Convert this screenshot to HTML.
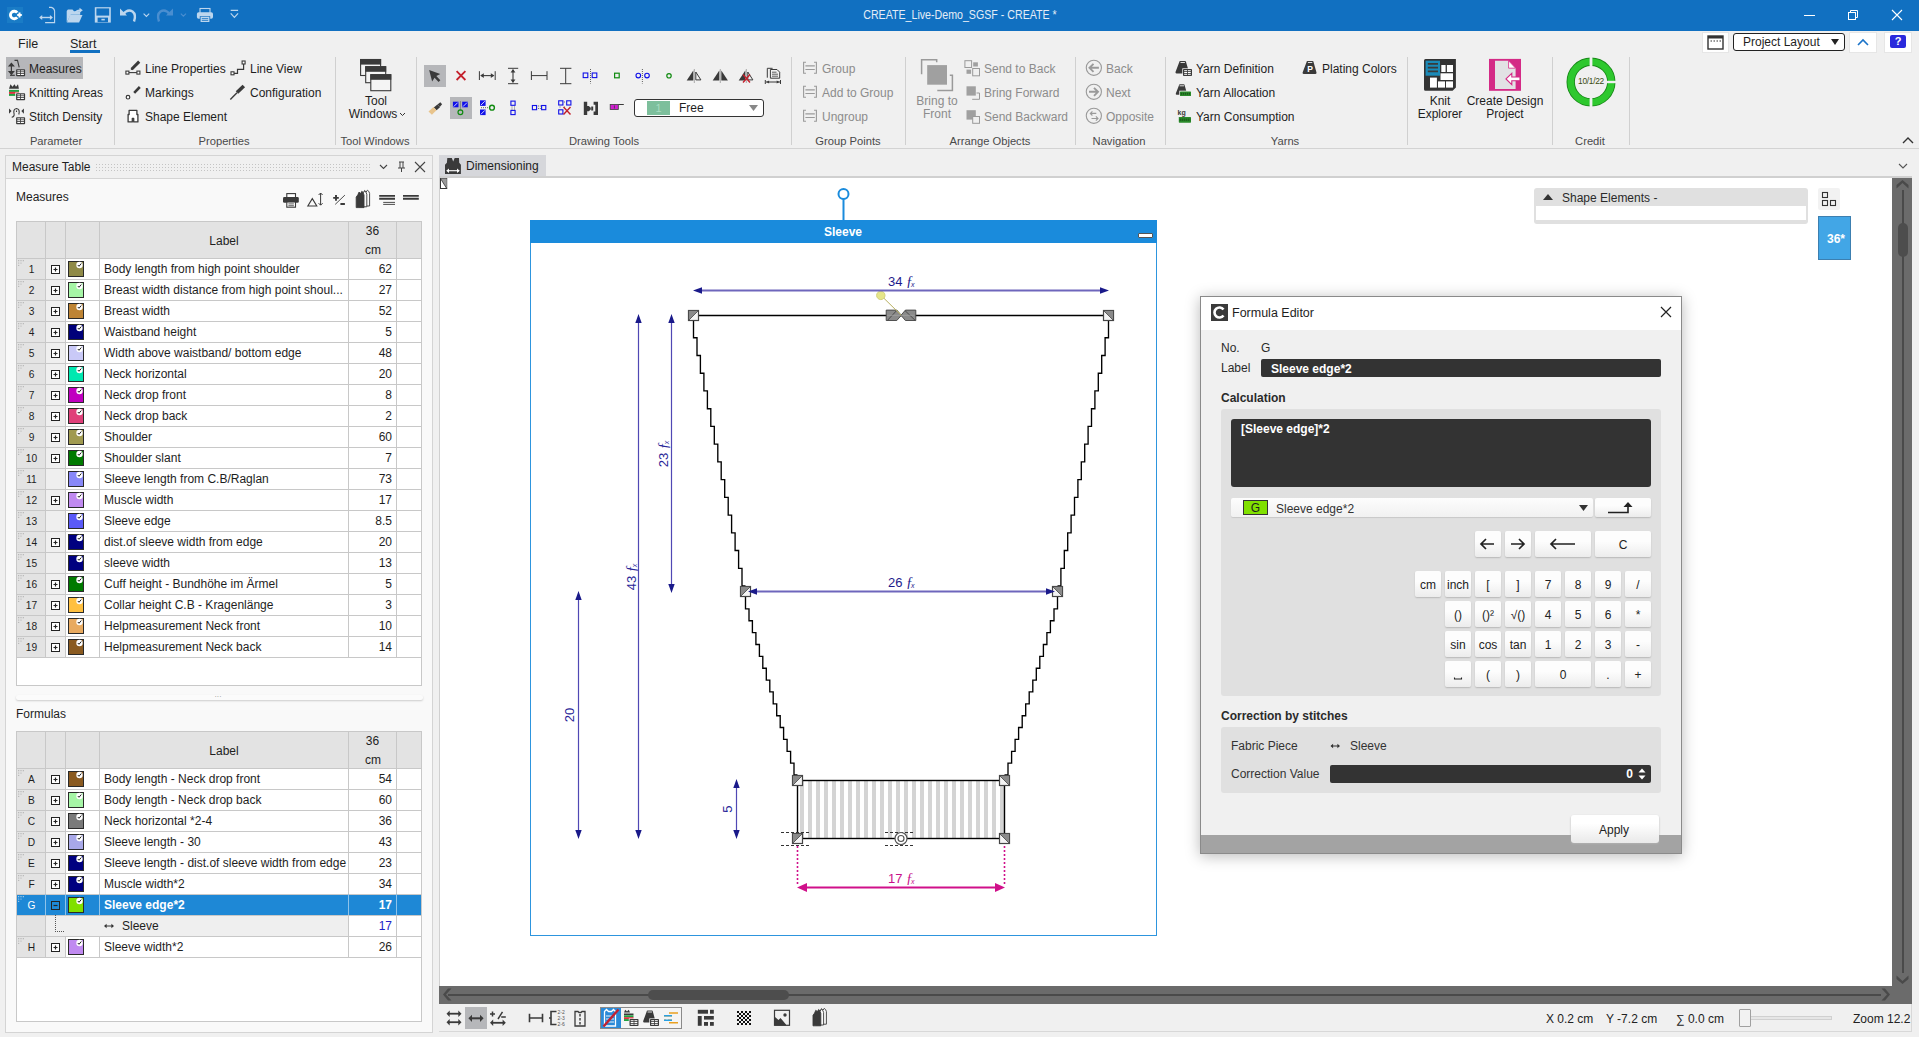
<!DOCTYPE html><html><head><meta charset="utf-8"><style>
html,body{margin:0;padding:0;}
body{width:1919px;height:1037px;overflow:hidden;position:relative;background:#f0f0f0;font-family:"Liberation Sans",sans-serif;}
.t{position:absolute;white-space:nowrap;}
.r{position:absolute;}
</style></head><body>
<div class="r" style="left:0px;top:0px;width:1919px;height:31px;background:#1170c1;"></div>
<svg class="r" style="left:7px;top:7px;" width="16" height="16" viewBox="0 0 16 16"><rect width="16" height="16" fill="#1a7cc6"/><path d="M10.2 5.6a3.8 3.8 0 1 0 0 4.8" stroke="#fff" stroke-width="2.9" fill="none"/><path d="M10.2 8h4.6M12.5 5.6v4.8" stroke="#fff" stroke-width="2"/></svg>
<svg class="r" style="left:30px;top:0px" width="220" height="31" viewBox="30 0 220 31"><path d="M49 7.4h2.3q2.6 0.4 3.3 3.4v11.8h-9.5" stroke="#bcd6ee" stroke-width="1.1" fill="none"/><path d="M40.5 17.5h11" stroke="#bcd6ee" stroke-width="1.4"/><path d="M39.2 17.5l3-2.6v5.2zM52.9 17.5l-3-2.6v5.2z" fill="#bcd6ee"/><path d="M66.7 22.6v-11.6l1.2-1.6h4.6l1.5 1.8h6.2v3.5h-9.5z" fill="#bcd6ee"/><path d="M66.9 22.6l3.2-7.6h12.4l-3.4 7.6z" fill="#bcd6ee"/><path d="M74.5 14q2-4.2 6.4-3.6" stroke="#bcd6ee" stroke-width="1.6" fill="none"/><path d="M82.8 10.2l-3.3-2.4v5z" fill="#bcd6ee"/><rect x="94.8" y="7.2" width="16" height="15.4" fill="#bcd6ee"/><rect x="96.4" y="8.4" width="12.8" height="7.2" fill="#1170c1"/><rect x="97.6" y="17.6" width="10.4" height="4.6" fill="#1170c1"/><rect x="101.4" y="18.8" width="3.4" height="1.6" fill="#bcd6ee"/><path d="M123 14.5q4.5-6 9.5-3q4 3 1.5 10" stroke="#bcd6ee" stroke-width="2.4" fill="none"/><path d="M120 8.5v7h7z" fill="#bcd6ee"/><path d="M143.6 13.6l2.8 2.8l2.8-2.8" stroke="#bcd6ee" stroke-width="1.1" fill="none"/><path d="M170 14.5q-4.5-6-9.5-3q-4 3-1.5 10" stroke="#4a8ed0" stroke-width="2.4" fill="none"/><path d="M173 8.5v7h-7z" fill="#4a8ed0"/><path d="M180.8 13.6l2.6 2.6l2.6-2.6" stroke="#4a8ed0" stroke-width="1.1" fill="none"/><rect x="200" y="8.5" width="10" height="5" fill="none" stroke="#bcd6ee" stroke-width="1.1"/><rect x="196.9" y="12.2" width="16.1" height="6.6" rx="1.8" fill="#bcd6ee"/><rect x="199.8" y="16.2" width="10.4" height="6.4" fill="#1170c1"/><rect x="200.6" y="16.8" width="8.8" height="5.2" fill="#bcd6ee"/><path d="M201.8 18.6h6.4M201.8 20.4h6.4" stroke="#1170c1" stroke-width="0.8"/><path d="M230.7 10.3h7.4M230.7 13.4l3.7 4l3.7-4" stroke="#bcd6ee" stroke-width="1.2" fill="none"/></svg>
<div class="t" style="left:660px;width:600px;text-align:center;top:6.6px;font-size:12.3px;line-height:16px;color:#e4edf7;font-weight:normal;transform:scaleX(0.865);">CREATE_Live-Demo_SGSF - CREATE *</div>
<div class="r" style="left:1804px;top:15px;width:11px;height:1px;background:#ffffff;"></div>
<svg class="r" style="left:1847px;top:9px;" width="12" height="12" viewBox="0 0 12 12"><rect x="1.5" y="3.5" width="7" height="7" stroke="#fff" fill="none"/><path d="M3.5 3.5v-2h7v7h-2" stroke="#fff" fill="none"/></svg>
<svg class="r" style="left:1891px;top:9px;" width="12" height="12" viewBox="0 0 12 12"><path d="M1 1l10 10M11 1l-10 10" stroke="#fff" stroke-width="1.1"/></svg>
<div class="t" style="left:18px;top:36.0px;font-size:12.5px;line-height:16px;color:#1e1e1e;font-weight:normal;">File</div>
<div class="t" style="left:70px;top:36.0px;font-size:12.5px;line-height:16px;color:#1e1e1e;font-weight:normal;">Start</div>
<div class="r" style="left:70px;top:50px;width:30px;height:3px;background:#1170c1;"></div>
<div class="r" style="left:1702px;top:32px;width:27px;height:21px;background:#ffffff;border:1px solid #e6e6e6;box-sizing:border-box;"></div>
<svg class="r" style="left:1707px;top:34px;" width="17" height="17" viewBox="0 0 17 17"><rect x="1" y="2" width="15" height="13" stroke="#333" stroke-width="1.4" fill="none"/><rect x="1" y="2" width="15" height="2.5" fill="#333"/><path d="M3.5 7h1.5M6.5 7h1.5M9.5 7h1.5M12.5 7h1.5" stroke="#333" stroke-width="1.2"/></svg>
<div class="r" style="left:1733px;top:33px;width:112px;height:18px;background:#ffffff;border:1px solid #222;box-sizing:border-box;border-radius:3px;"></div>
<div class="t" style="left:1743px;top:34.0px;font-size:12px;line-height:16px;color:#1e1e1e;font-weight:normal;">Project Layout</div>
<svg class="r" style="left:1830px;top:38px;" width="10" height="8" viewBox="0 0 10 8"><path d="M1 1h8l-4 6z" fill="#222"/></svg>
<div class="r" style="left:1849px;top:32px;width:28px;height:21px;background:#ffffff;border:1px solid #e6e6e6;box-sizing:border-box;"></div>
<svg class="r" style="left:1857px;top:38px;" width="12" height="8" viewBox="0 0 12 8"><path d="M1 7l5-5l5 5" stroke="#1a73c8" stroke-width="1.6" fill="none"/></svg>
<div class="r" style="left:1884px;top:32px;width:28px;height:21px;background:#ffffff;border:1px solid #e6e6e6;box-sizing:border-box;"></div>
<div class="r" style="left:1890px;top:35px;width:16px;height:13px;background:#2a2adc;border-radius:2px;"></div>
<div class="t" style="left:1598px;width:600px;text-align:center;top:35.0px;font-size:11px;line-height:13px;color:#ffffff;font-weight:bold;">?</div>
<div class="r" style="left:0px;top:148px;width:1919px;height:1px;background:#d3d3d3;"></div>
<div class="r" style="left:114px;top:57px;width:1px;height:88px;background:#d0d0d0;"></div>
<div class="r" style="left:335px;top:57px;width:1px;height:88px;background:#d0d0d0;"></div>
<div class="r" style="left:416px;top:57px;width:1px;height:88px;background:#d0d0d0;"></div>
<div class="r" style="left:791px;top:57px;width:1px;height:88px;background:#d0d0d0;"></div>
<div class="r" style="left:905px;top:57px;width:1px;height:88px;background:#d0d0d0;"></div>
<div class="r" style="left:1075px;top:57px;width:1px;height:88px;background:#d0d0d0;"></div>
<div class="r" style="left:1165px;top:57px;width:1px;height:88px;background:#d0d0d0;"></div>
<div class="r" style="left:1407px;top:57px;width:1px;height:88px;background:#d0d0d0;"></div>
<div class="r" style="left:1552px;top:57px;width:1px;height:88px;background:#d0d0d0;"></div>
<div class="r" style="left:1629px;top:57px;width:1px;height:88px;background:#d0d0d0;"></div>
<div class="t" style="left:-244px;width:600px;text-align:center;top:132.5px;font-size:11.2px;line-height:16px;color:#4a4a4a;font-weight:normal;">Parameter</div>
<div class="t" style="left:-76px;width:600px;text-align:center;top:132.5px;font-size:11.2px;line-height:16px;color:#4a4a4a;font-weight:normal;">Properties</div>
<div class="t" style="left:75px;width:600px;text-align:center;top:132.5px;font-size:11.2px;line-height:16px;color:#4a4a4a;font-weight:normal;">Tool Windows</div>
<div class="t" style="left:304px;width:600px;text-align:center;top:132.5px;font-size:11.2px;line-height:16px;color:#4a4a4a;font-weight:normal;">Drawing Tools</div>
<div class="t" style="left:548px;width:600px;text-align:center;top:132.5px;font-size:11.2px;line-height:16px;color:#4a4a4a;font-weight:normal;">Group Points</div>
<div class="t" style="left:690px;width:600px;text-align:center;top:132.5px;font-size:11.2px;line-height:16px;color:#4a4a4a;font-weight:normal;">Arrange Objects</div>
<div class="t" style="left:819px;width:600px;text-align:center;top:132.5px;font-size:11.2px;line-height:16px;color:#4a4a4a;font-weight:normal;">Navigation</div>
<div class="t" style="left:985px;width:600px;text-align:center;top:132.5px;font-size:11.2px;line-height:16px;color:#4a4a4a;font-weight:normal;">Yarns</div>
<div class="t" style="left:1290px;width:600px;text-align:center;top:132.5px;font-size:11.2px;line-height:16px;color:#4a4a4a;font-weight:normal;">Credit</div>
<svg class="r" style="left:1902px;top:136px;" width="12" height="8" viewBox="0 0 12 8"><path d="M1 7l5-5l5 5" stroke="#333" stroke-width="1.4" fill="none"/></svg>
<div class="r" style="left:6px;top:57px;width:77px;height:22px;background:#b6b7ba;"></div>
<svg class="r" style="left:6px;top:57px" width="22" height="70" viewBox="6 57 22 70"><path d="M11.4 64v9.5M9.2 66l2.2-2.6l2.2 2.6zM9.2 71.6l2.2 2.6l2.2-2.6z" stroke="#3a3a3a" stroke-width="1.2" fill="#3a3a3a"/><path d="M10 75.3h4.8" stroke="#3a3a3a" stroke-width="1.2"/><path d="M14.5 60.4h3l1.7 7" stroke="#3a3a3a" stroke-width="1.1" fill="none"/><rect x="16.1" y="69.2" width="9" height="7" rx="0.8" fill="#3a3a3a"/><rect x="17.3" y="70.4" width="2.9" height="1.0" fill="#fff"/><rect x="17.3" y="72.2" width="2.9" height="1.0" fill="#fff"/><rect x="17.3" y="74.0" width="2.9" height="1.0" fill="#fff"/><rect x="21.0" y="70.4" width="2.9" height="1.0" fill="#fff"/><rect x="21.0" y="72.2" width="2.9" height="1.0" fill="#fff"/><rect x="21.0" y="74.0" width="2.9" height="1.0" fill="#fff"/><path d="M9 88.8l1.5-4.5l2 2.5l2-2.5l1.5 2.5l2-2.5l0.9 4.5z" fill="#3a3a3a"/><rect x="9" y="89.9" width="10" height="2" fill="#20a040"/><rect x="9" y="91.9" width="10" height="2" fill="#e03040"/><rect x="9" y="93.9" width="10" height="2" fill="#20a040"/><rect x="15.2" y="92.5" width="10.5" height="8.3" fill="#f0f0f0"/><rect x="16.1" y="93.2" width="9" height="7" rx="0.8" fill="#3a3a3a"/><rect x="17.3" y="94.4" width="2.9" height="1.0" fill="#fff"/><rect x="17.3" y="96.2" width="2.9" height="1.0" fill="#fff"/><rect x="17.3" y="98.0" width="2.9" height="1.0" fill="#fff"/><rect x="21.0" y="94.4" width="2.9" height="1.0" fill="#fff"/><rect x="21.0" y="96.2" width="2.9" height="1.0" fill="#fff"/><rect x="21.0" y="98.0" width="2.9" height="1.0" fill="#fff"/><path d="M9 108.4v5.4l2.6-2.7zM23.9 108.4v5.4l-2.6-2.7z" fill="#3a3a3a"/><path d="M14.2 114.5q-1.5-5.5 2.3-6q3.8 0.5 2.3 6M16.5 110.5v1.5M14.2 114.5q0 2.5-2.5 2.7" stroke="#3a3a3a" stroke-width="1.1" fill="none"/><rect x="15.2" y="116.5" width="10.5" height="8.3" fill="#f0f0f0"/><rect x="16.1" y="117.2" width="9" height="7" rx="0.8" fill="#3a3a3a"/><rect x="17.3" y="118.4" width="2.9" height="1.0" fill="#fff"/><rect x="17.3" y="120.2" width="2.9" height="1.0" fill="#fff"/><rect x="17.3" y="122.0" width="2.9" height="1.0" fill="#fff"/><rect x="21.0" y="118.4" width="2.9" height="1.0" fill="#fff"/><rect x="21.0" y="120.2" width="2.9" height="1.0" fill="#fff"/><rect x="21.0" y="122.0" width="2.9" height="1.0" fill="#fff"/></svg>
<div class="t" style="left:29px;top:61.0px;font-size:12px;line-height:16px;color:#1e1e1e;font-weight:normal;">Measures</div>
<div class="t" style="left:29px;top:85.0px;font-size:12px;line-height:16px;color:#1e1e1e;font-weight:normal;">Knitting Areas</div>
<div class="t" style="left:29px;top:109.0px;font-size:12px;line-height:16px;color:#1e1e1e;font-weight:normal;">Stitch Density</div>
<svg class="r" style="left:120px;top:55px" width="130" height="70" viewBox="120 55 130 70"><path d="M128.5 72.6h9" stroke="#3a3a3a" stroke-width="1.1"/><rect x="125.9" y="71.1" width="3" height="3" fill="#fff" stroke="#3a3a3a" stroke-width="1.1"/><rect x="136.9" y="71.1" width="3" height="3" fill="#fff" stroke="#3a3a3a" stroke-width="1.1"/><path d="M131.6 69.2L139.2 61.6" stroke="#3a3a3a" stroke-width="3"/><path d="M130.6 70.2l0.8-1.8l1.2 1.2z" fill="#3a3a3a"/><circle cx="128" cy="97.2" r="1.8" fill="#fff" stroke="#3a3a3a" stroke-width="1.2"/><path d="M134.2 92.8L139.8 87" stroke="#3a3a3a" stroke-width="2.6"/><path d="M129.1 114.5v-4.2h7.8v4.2h1v7.4h-4.2v-3.5h-1.4v3.5h-4.2v-7.4z" fill="#fff" stroke="#3a3a3a" stroke-width="1.3" stroke-linejoin="round"/><path d="M232.5 73.3h5v-3.9h6.1v-6.9" stroke="#3a3a3a" stroke-width="1.2" fill="none"/><rect x="231" y="71.8" width="3" height="3" fill="#fff" stroke="#3a3a3a" stroke-width="1.1"/><rect x="242.1" y="61" width="3" height="3" fill="#fff" stroke="#3a3a3a" stroke-width="1.1"/><path d="M230.3 99.4L237 92.7" stroke="#3a3a3a" stroke-width="1.4"/><path d="M237 92.5L243.8 86" stroke="#3a3a3a" stroke-width="3.6"/></svg>
<div class="t" style="left:145px;top:61.0px;font-size:12px;line-height:16px;color:#1e1e1e;font-weight:normal;">Line Properties</div>
<div class="t" style="left:250px;top:61.0px;font-size:12px;line-height:16px;color:#1e1e1e;font-weight:normal;">Line View</div>
<div class="t" style="left:145px;top:85.0px;font-size:12px;line-height:16px;color:#1e1e1e;font-weight:normal;">Markings</div>
<div class="t" style="left:250px;top:85.0px;font-size:12px;line-height:16px;color:#1e1e1e;font-weight:normal;">Configuration</div>
<div class="t" style="left:145px;top:109.0px;font-size:12px;line-height:16px;color:#1e1e1e;font-weight:normal;">Shape Element</div>
<svg class="r" style="left:355px;top:55px" width="40" height="40" viewBox="355 55 40 40"><rect x="360.6" y="59.5" width="20" height="16" fill="#f4f4f4" stroke="#3a3a3a" stroke-width="1.1"/><rect x="360.1" y="59" width="21" height="5.6" fill="#3a3a3a"/><rect x="365.7" y="66.7" width="20" height="16" fill="#f4f4f4" stroke="#3a3a3a" stroke-width="1.1"/><rect x="365.2" y="66.2" width="21" height="5.6" fill="#3a3a3a"/><rect x="370.8" y="74.7" width="20" height="16" fill="#f4f4f4" stroke="#3a3a3a" stroke-width="1.1"/><rect x="370.3" y="74.2" width="21" height="5.6" fill="#3a3a3a"/></svg>
<div class="t" style="left:76px;width:600px;text-align:center;top:93.0px;font-size:12px;line-height:16px;color:#1e1e1e;font-weight:normal;">Tool</div>
<div class="t" style="left:73px;width:600px;text-align:center;top:106.0px;font-size:12px;line-height:16px;color:#1e1e1e;font-weight:normal;">Windows</div>
<svg class="r" style="left:399px;top:112px;" width="7" height="5" viewBox="0 0 7 5"><path d="M1 1l2.5 2.5l2.5-2.5" stroke="#333" fill="none"/></svg>
<div class="r" style="left:424px;top:65px;width:22px;height:22px;background:#b6b7ba;"></div>
<div class="r" style="left:450px;top:97px;width:22px;height:22px;background:#b6b7ba;"></div>
<svg class="r" style="left:420px;top:60px" width="370" height="60" viewBox="420 60 370 60"><path d="M430 69.5l10.5 5.3l-4.2 1.6l3.4 4.6l-2 1.5l-3.4-4.6l-2.9 3.2z" fill="#3a3a3a" transform="rotate(-8 434 76)"/><path d="M456.6 71.2l8.8 8.8M465.4 71.2l-8.8 8.8" stroke="#c4202c" stroke-width="1.8"/><path d="M479.4 71.2v8.8M495.2 71.2v8.8" stroke="#3a3a3a" stroke-width="1"/><path d="M481 75.6h12.6" stroke="#3a3a3a" stroke-width="1.1"/><path d="M480.2 75.6l3.6-2.4v4.8zM494.4 75.6l-3.6-2.4v4.8z" fill="#3a3a3a"/><path d="M508 68.3h10.2M508 83.7h10.2" stroke="#3a3a3a" stroke-width="1"/><path d="M513 69.8v12.4" stroke="#3a3a3a" stroke-width="1.1"/><path d="M513 69l-2.4 3.6h4.8zM513 83l-2.4-3.6h4.8z" fill="#3a3a3a"/><path d="M531.4 71.2v8.8M547 71.2v8.8M531.4 75.6h15.6" stroke="#3a3a3a" stroke-width="1"/><path d="M560 68.3h11.4M560 83.7h11.4M565.7 68.3v15.4" stroke="#3a3a3a" stroke-width="1"/><rect x="583.2" y="73" width="4.6" height="4.6" fill="none" stroke="#1010e8" stroke-width="1.1"/><rect x="592.2" y="73" width="4.6" height="4.6" fill="none" stroke="#1010e8" stroke-width="1.1"/><path d="M590.5 69v14.5" stroke="#3a3a3a" stroke-dasharray="1 1" stroke-width="0.8"/><rect x="614.6" y="73.2" width="4.6" height="4.6" fill="none" stroke="#108a10" stroke-width="1.2"/><circle cx="638.3" cy="75.6" r="2.3" fill="none" stroke="#1010e8" stroke-width="1.1"/><circle cx="647" cy="75.6" r="2.3" fill="none" stroke="#1010e8" stroke-width="1.1"/><path d="M642.4 69v14.5" stroke="#3a3a3a" stroke-dasharray="1 1" stroke-width="0.8"/><circle cx="669" cy="75.8" r="2.2" fill="none" stroke="#108a10" stroke-width="1.2"/><path d="M693.3 70.6v9.8h-6.6z" fill="#3a3a3a"/><path d="M695.8 72v7.9h5.1z" fill="none" stroke="#3a3a3a" stroke-width="1"/><path d="M694.3 69.5v14" stroke="#3a3a3a" stroke-dasharray="1 1" stroke-width="0.8"/><path d="M719.3 70.6v9.8h-6.6z" fill="#3a3a3a"/><path d="M721.3 70.6v9.8h6.6z" fill="#3a3a3a"/><path d="M720.3 69.5v14" stroke="#3a3a3a" stroke-dasharray="1 1" stroke-width="0.8"/><path d="M745.3 70.6v9.8h-6.6z" fill="#3a3a3a"/><path d="M747.8 72v7.9h5.1z" fill="none" stroke="#3a3a3a" stroke-width="1"/><path d="M746.3 69.5v14" stroke="#3a3a3a" stroke-dasharray="1 1" stroke-width="0.8"/><path d="M743.0 74.5l7 8M750.0 74.5l-7 8" stroke="#c4202c" stroke-width="1.4"/><path d="M767.3 77.7v-9.4h5.3" fill="none" stroke="#3a3a3a" stroke-width="1"/><path d="M770.4 78.2v-8.7h6.6l2.7 2.7v6z" fill="#f0f0f0" stroke="#3a3a3a" stroke-width="1"/><path d="M772 72.2h4.5M772 74.2h6M772 76.2h6" stroke="#3a3a3a" stroke-width="0.8"/><path d="M765.3 80v4M780.5 80v4M766 82h14" stroke="#3a3a3a" stroke-width="1"/><path d="M766.3 82l2.8-1.6v3.2zM779.5 82l-2.8-1.6v3.2z" fill="#3a3a3a"/><path d="M437.5 104.5l2.8-2.2l1.8 2l-2.3 2.7z" fill="#3a3a3a"/><path d="M433.8 107.5l3.6-3l2.6 2.8l-3.4 3z" fill="#3a3a3a"/><path d="M428.5 111.5l5-4.5l3 3.2l-4.6 4.6z" fill="#e8c48c"/><rect x="452.9" y="101.7" width="5.6" height="5.6" fill="#1010e8"/><rect x="462.2" y="101.7" width="5.6" height="5.6" fill="#1010e8"/><path d="M453.7 106.6l4-4M463 106.6l4-4" stroke="#fff" stroke-width="0.8"/><path d="M460.4 101.5v10" stroke="#3a3a3a" stroke-dasharray="1 1" stroke-width="0.8"/><circle cx="460.4" cy="112.2" r="2.4" fill="none" stroke="#108a10" stroke-width="1.2"/><rect x="480" y="100.3" width="5.6" height="5.6" fill="#1010e8"/><rect x="480" y="109.5" width="5.6" height="5.6" fill="#1010e8"/><path d="M480.8 105.2l4-4M480.8 114.4l4-4" stroke="#fff" stroke-width="0.8"/><path d="M481 107.7h7.5" stroke="#3a3a3a" stroke-dasharray="1 1" stroke-width="0.8"/><circle cx="492" cy="107.7" r="2.4" fill="none" stroke="#108a10" stroke-width="1.4"/><rect x="510.9" y="101.1" width="4.2" height="4.2" fill="none" stroke="#1010e8" stroke-width="1.1"/><rect x="510.9" y="110.4" width="4.2" height="4.2" fill="none" stroke="#1010e8" stroke-width="1.1"/><path d="M511.5 107h1M514 107h1M511.5 109h1M514 109h1" stroke="#3a3a3a" stroke-width="0.7"/><rect x="532.4" y="105.5" width="4.2" height="4.2" fill="none" stroke="#1010e8" stroke-width="1.1"/><rect x="541.6" y="105.5" width="4.2" height="4.2" fill="none" stroke="#1010e8" stroke-width="1.1"/><path d="M538 106h1M538 108.5h1M539.8 106h1M539.8 108.5h1" stroke="#3a3a3a" stroke-width="0.7"/><rect x="558.7" y="100.8" width="4.2" height="4.2" fill="none" stroke="#1010e8" stroke-width="1.1"/><rect x="566.7" y="100.8" width="4.2" height="4.2" fill="none" stroke="#1010e8" stroke-width="1.1"/><rect x="558.7" y="109.8" width="4.2" height="4.2" fill="none" stroke="#1010e8" stroke-width="1.1"/><path d="M563.5 107l7 7.5M570.5 107l-7 7.5" stroke="#c4202c" stroke-width="1.4"/><path d="M564 102h1M564 107h0.8M559.5 107h1" stroke="#3a3a3a" stroke-width="0.7"/><path d="M583.8 101.8h3.4v4.3h1.6l2 1.7v1.8l-2 1.7h-1.6v3.6h-3.4z" fill="#3a3a3a"/><path d="M598 101.8h-4.4v3h1.7v6.8h-1.7v3.3h4.4z" fill="#3a3a3a"/><path d="M591.2 106.5h2v4h-2z" fill="#3a3a3a"/><rect x="610.2" y="104.5" width="8.1" height="4.9" fill="#d020d0" stroke="#3a3a3a" stroke-width="0.8"/><path d="M614.4 105.5v3" stroke="#3a3a3a" stroke-width="0.8"/><path d="M618.3 104.5h5.5" stroke="#3a3a3a" stroke-width="1"/></svg>
<div class="r" style="left:634px;top:99px;width:130px;height:18px;background:#ffffff;border:1px solid #333;box-sizing:border-box;border-radius:3px;"></div>
<div class="r" style="left:647px;top:101px;width:23px;height:14px;background:#7dbf9c;"></div>
<div class="t" style="left:358.5px;width:600px;text-align:center;top:101.0px;font-size:11px;line-height:14px;color:#a8dcc0;font-weight:normal;">1</div>
<div class="t" style="left:679px;top:100.0px;font-size:12px;line-height:16px;color:#1e1e1e;font-weight:normal;">Free</div>
<svg class="r" style="left:749px;top:105px;" width="9" height="6" viewBox="0 0 9 6"><path d="M0 0h9l-4.5 6z" fill="#888"/></svg>
<svg class="r" style="left:795px;top:55px" width="200" height="72" viewBox="795 55 200 72"><path d="M806 62.3h-2.4v11h2.4M814 62.3h2.4v11h-2.4" stroke="#9a9a9a" stroke-width="1.1" fill="none"/><path d="M805.4 65.9h9.4M805.4 69.5h9.4" stroke="#9a9a9a" stroke-width="1.1"/><path d="M806 86.3h-2.4v11h2.4M814 86.3h2.4v11h-2.4" stroke="#9a9a9a" stroke-width="1.1" fill="none"/><path d="M805.4 89.9h9.4M805.4 93.5h9.4" stroke="#9a9a9a" stroke-width="1.1"/><path d="M806 110.3h-2.4v11h2.4M814 110.3h2.4v11h-2.4" stroke="#9a9a9a" stroke-width="1.1" fill="none"/><path d="M805.4 113.9h9.4M805.4 117.5h9.4" stroke="#9a9a9a" stroke-width="1.1"/><path d="M921.6 74.3v-14.6h15.1v2.6M937.3 90.4h15.1v-15.1h-2.6" stroke="#9a9a9a" stroke-width="1.5" fill="none"/><rect x="927.2" y="65.1" width="19.8" height="19.6" fill="#a0a0a0"/><rect x="964.9" y="60.7" width="6.7" height="6.8" fill="none" stroke="#9a9a9a" stroke-width="1"/><rect x="973.2" y="62.3" width="4.7" height="4.2" fill="#a0a0a0"/><rect x="966.5" y="69.6" width="4.6" height="4.2" fill="#a0a0a0"/><rect x="972.7" y="68.5" width="6.8" height="7.3" fill="none" stroke="#9a9a9a" stroke-width="1"/><rect x="966.5" y="86.3" width="9.3" height="9.3" fill="#a0a0a0"/><path d="M972.2 99.3h7.3v-6.3h-3" stroke="#9a9a9a" stroke-width="1" fill="none"/><rect x="966.5" y="110.2" width="9.3" height="9.4" fill="#a0a0a0"/><rect x="972.7" y="116.5" width="6.8" height="6.8" fill="#f0f0f0" stroke="#9a9a9a" stroke-width="1"/></svg>
<div class="t" style="left:822px;top:61.0px;font-size:12px;line-height:16px;color:#8c8c8c;font-weight:normal;">Group</div>
<div class="t" style="left:822px;top:85.0px;font-size:12px;line-height:16px;color:#8c8c8c;font-weight:normal;">Add to Group</div>
<div class="t" style="left:822px;top:109.0px;font-size:12px;line-height:16px;color:#8c8c8c;font-weight:normal;">Ungroup</div>
<div class="t" style="left:637px;width:600px;text-align:center;top:93.0px;font-size:12px;line-height:16px;color:#8c8c8c;font-weight:normal;">Bring to</div>
<div class="t" style="left:637px;width:600px;text-align:center;top:106.0px;font-size:12px;line-height:16px;color:#8c8c8c;font-weight:normal;">Front</div>
<div class="t" style="left:984px;top:61.0px;font-size:12px;line-height:16px;color:#8c8c8c;font-weight:normal;">Send to Back</div>
<div class="t" style="left:984px;top:85.0px;font-size:12px;line-height:16px;color:#8c8c8c;font-weight:normal;">Bring Forward</div>
<div class="t" style="left:984px;top:109.0px;font-size:12px;line-height:16px;color:#8c8c8c;font-weight:normal;">Send Backward</div>
<svg class="r" style="left:1080px;top:55px" width="30" height="72" viewBox="1080 55 30 72"><circle cx="1093.85" cy="67.8" r="7.6" stroke="#9a9a9a" stroke-width="1.1" fill="none"/><circle cx="1093.85" cy="91.8" r="7.6" stroke="#9a9a9a" stroke-width="1.1" fill="none"/><circle cx="1093.85" cy="115.8" r="7.6" stroke="#9a9a9a" stroke-width="1.1" fill="none"/><path d="M1090 67.8h8.9M1093.5 63.8l-4 4l4 4" stroke="#9a9a9a" stroke-width="1.9" fill="none"/><path d="M1089 91.8h8.9M1094 87.8l4 4l-4 4" stroke="#9a9a9a" stroke-width="1.9" fill="none"/><path d="M1090.3 113.4h6M1092.4 111.3l-2.1 2.1l2.1 2.1M1091.5 118.5h6.5M1095.9 116.4l2.1 2.1l-2.1 2.1" stroke="#9a9a9a" stroke-width="1.1" fill="none"/></svg>
<div class="t" style="left:1106px;top:61.0px;font-size:12px;line-height:16px;color:#8c8c8c;font-weight:normal;">Back</div>
<div class="t" style="left:1106px;top:85.0px;font-size:12px;line-height:16px;color:#8c8c8c;font-weight:normal;">Next</div>
<div class="t" style="left:1106px;top:109.0px;font-size:12px;line-height:16px;color:#8c8c8c;font-weight:normal;">Opposite</div>
<svg class="r" style="left:1170px;top:56px" width="160" height="70" viewBox="1170 56 160 70"><path d="M1179.2 62.2q0-1.2 1.2-1.2h4.5q1.2 0 1.2 1.2l2.9 9.9q0.3 1.4-1 1.4h-11.5q-1.3 0-1-1.4z" fill="#3a3a3a"/><path d="M1180.9 62.5h3.6" stroke="#f0f0f0" stroke-width="0.9" stroke-linecap="round"/><rect x="1182.3" y="68.3" width="10.4" height="8.4" fill="#f0f0f0"/><rect x="1183" y="69" width="9" height="7" rx="0.8" fill="#3a3a3a"/><rect x="1184.2" y="70.2" width="2.9" height="1.0" fill="#fff"/><rect x="1184.2" y="72.0" width="2.9" height="1.0" fill="#fff"/><rect x="1184.2" y="73.8" width="2.9" height="1.0" fill="#fff"/><rect x="1187.9" y="70.2" width="2.9" height="1.0" fill="#fff"/><rect x="1187.9" y="72.0" width="2.9" height="1.0" fill="#fff"/><rect x="1187.9" y="73.8" width="2.9" height="1.0" fill="#fff"/><path d="M1178.9 85.5q0-1.2 1.2-1.2h3.4q1.2 0 1.2 1.2l2.3 7.9q0.3 1.4-1 1.4h-9.2q-1.3 0-1-1.4z" fill="#3a3a3a"/><path d="M1180.0 85.8h3.6" stroke="#f0f0f0" stroke-width="0.9" stroke-linecap="round"/><rect x="1179.3" y="90.7" width="12.5" height="6" fill="#f0f0f0"/><rect x="1180" y="91.4" width="11" height="4.6" rx="0.6" fill="#2a8a2a"/><path d="M1180.8 93.7h9.4" stroke="#1a5a1a" stroke-width="2.1" stroke-dasharray="1.2 0.8"/><text x="1177.6" y="115.2" font-size="7" font-weight="bold" font-family="Liberation Sans" fill="#3a3a3a">kg</text><rect x="1178.8" y="117" width="12.2" height="5.7" rx="0.6" fill="#2a8a2a"/><path d="M1179.6 119.8h10.6" stroke="#1a5a1a" stroke-width="2.6" stroke-dasharray="1.2 0.8"/><path d="M1306.5 62.2q0-1.2 1.2-1.2h4.7q1.2 0 1.2 1.2l2.9 10.4q0.3 1.4-1 1.4h-11.9q-1.3 0-1-1.4z" fill="#3a3a3a"/><path d="M1308.3 62.5h3.6" stroke="#f0f0f0" stroke-width="0.9" stroke-linecap="round"/><text x="1310.1" y="72" font-size="8.5" font-weight="bold" text-anchor="middle" font-family="Liberation Sans" fill="#fff">P</text></svg>
<div class="t" style="left:1196px;top:61.0px;font-size:12px;line-height:16px;color:#1e1e1e;font-weight:normal;">Yarn Definition</div>
<div class="t" style="left:1196px;top:85.0px;font-size:12px;line-height:16px;color:#1e1e1e;font-weight:normal;">Yarn Allocation</div>
<div class="t" style="left:1196px;top:109.0px;font-size:12px;line-height:16px;color:#1e1e1e;font-weight:normal;">Yarn Consumption</div>
<div class="t" style="left:1322px;top:61.0px;font-size:12px;line-height:16px;color:#1e1e1e;font-weight:normal;">Plating Colors</div>
<svg class="r" style="left:1420px;top:55px" width="40" height="40" viewBox="1420 55 40 40"><path d="M1425.5 58.9h30.4v28.5l-3.3 3.3h-27.1a1.5 1.5 0 0 1-1.5-1.5v-28.8a1.5 1.5 0 0 1 1.5-1.5z" fill="#333"/><rect x="1425.6" y="60.7" width="14.4" height="15" fill="#1a8ab8"/><path d="M1427.8 63.9h10.2M1427.8 67.6h10.2M1427.8 71.4h10.2" stroke="#3a3a3a" stroke-width="1.8"/><rect x="1441.3" y="65" width="4.3" height="7" fill="#fff"/><rect x="1446.9" y="65" width="6.1" height="7" fill="#fff"/><rect x="1440.5" y="73.3" width="12.5" height="6.7" fill="#fff"/><rect x="1430" y="77.6" width="6.9" height="10" fill="#fff"/><rect x="1438" y="81.4" width="7" height="6.2" fill="#fff"/><rect x="1446" y="81.4" width="7" height="6.2" fill="#fff"/></svg>
<div class="t" style="left:1140px;width:600px;text-align:center;top:93.0px;font-size:12px;line-height:16px;color:#1e1e1e;font-weight:normal;">Knit</div>
<div class="t" style="left:1140px;width:600px;text-align:center;top:106.0px;font-size:12px;line-height:16px;color:#1e1e1e;font-weight:normal;">Explorer</div>
<svg class="r" style="left:1485px;top:55px" width="40" height="40" viewBox="1485 55 40 40"><rect x="1489" y="58.9" width="32" height="31.9" fill="#d42a86"/><path d="M1495 60.8h13.6l7 7.4v20.7h-20.6z" fill="#e2e2e4"/><path d="M1508.6 60.8v7.4h7z" fill="#fff" stroke="#d42a86" stroke-width="0.8"/><path d="M1506 78.9l5.8-5.6v3.7h8.2v3.8h-8.2v3.8z" fill="#fff" stroke="#d42a86" stroke-width="1.1"/></svg>
<div class="t" style="left:1205px;width:600px;text-align:center;top:93.0px;font-size:12px;line-height:16px;color:#1e1e1e;font-weight:normal;">Create Design</div>
<div class="t" style="left:1205px;width:600px;text-align:center;top:106.0px;font-size:12px;line-height:16px;color:#1e1e1e;font-weight:normal;">Project</div>
<svg class="r" style="left:1560px;top:52px" width="62" height="62" viewBox="1560 52 62 62"><circle cx="1591" cy="82" r="20.3" stroke="#1a8a1a" stroke-width="8.4" fill="none"/><circle cx="1591" cy="82" r="20.3" stroke="#2ec82e" stroke-width="6.6" fill="none"/><rect x="1589.6" y="56" width="2.8" height="11" fill="#f0f0f0"/><rect x="1589.6" y="97" width="2.8" height="11" fill="#f0f0f0"/><rect x="1606" y="80.8" width="11" height="2.4" fill="#f0f0f0"/><text x="1591" y="84.2" font-size="8.4" text-anchor="middle" font-family="Liberation Sans" fill="#3a4a10" letter-spacing="-0.3">10/1/22</text></svg>
<div class="r" style="left:5px;top:155px;width:428px;height:878px;background:#f9f9f9;border:1px solid #d4d4d4;box-sizing:border-box;"></div>
<div class="r" style="left:6px;top:156px;width:426px;height:22px;background:#f0f0f0;"></div>
<div class="r" style="left:6px;top:178px;width:426px;height:1px;background:#d4d4d4;"></div>
<div class="t" style="left:12px;top:159.0px;font-size:12px;line-height:16px;color:#1e1e1e;font-weight:normal;">Measure Table</div>
<div class="r" style="left:95px;top:163px;width:276px;height:8px;background-image:radial-gradient(circle,#c4c4c4 0.6px,transparent 0.9px);background-size:3px 3px;"></div>
<svg class="r" style="left:379px;top:164px;" width="9" height="6" viewBox="0 0 9 6"><path d="M1 1l3.5 3.5l3.5-3.5" stroke="#444" stroke-width="1.1" fill="none"/></svg>
<svg class="r" style="left:397px;top:161px;" width="9" height="12" viewBox="0 0 9 12"><path d="M2 1h5M3 1v6M6 1v6M1 7h7M4.5 7v4" stroke="#444" stroke-width="1" fill="none"/></svg>
<svg class="r" style="left:414px;top:161px;" width="12" height="12" viewBox="0 0 12 12"><path d="M1 1l10 10M11 1l-10 10" stroke="#444" stroke-width="1.1"/></svg>
<div class="t" style="left:16px;top:189.0px;font-size:12px;line-height:16px;color:#1e1e1e;font-weight:normal;">Measures</div>
<svg class="r" style="left:275px;top:185px" width="150" height="30" viewBox="275 185 150 30"><rect x="286.8" y="193.6" width="8.7" height="4" fill="#fff" stroke="#3a3a3a" stroke-width="1.1"/><rect x="283" y="197.1" width="15.8" height="5.6" rx="1.3" fill="#3a3a3a"/><rect x="286.8" y="202" width="8.7" height="5.2" fill="#fff" stroke="#3a3a3a" stroke-width="1.1"/><path d="M288.4 203.9h5.5M288.4 205.7h5.5" stroke="#3a3a3a" stroke-width="0.8"/><path d="M307.8 206l4.5-7.4l4.5 7.4z" fill="none" stroke="#3a3a3a" stroke-width="1.1"/><path d="M320.6 193v12M318.6 195l2-2l2 2M318.6 203.2l2 2l2-2" stroke="#3a3a3a" stroke-width="1" fill="none"/><path d="M333.2 197.9h5.6M336 195.1v5.6M340.4 204h4.5" stroke="#3a3a3a" stroke-width="1.9"/><path d="M335.2 204.4l9.7-9.3" stroke="#3a3a3a" stroke-width="0.9"/><path d="M361.8 206.0v-10.5l1.6-2.2l1.2-2.8l1.6 1.5l1.2-1.8l1.4 1.2l0.8 2v12.6z" fill="#fafafa" stroke="#3a3a3a" stroke-width="0.9" stroke-linejoin="round"/><path d="M359.0 206.79999999999998v-10.5l1.6-2.2l1.2-2.8l1.6 1.5l1.2-1.8l1.4 1.2l0.8 2v12.6z" fill="#fafafa" stroke="#3a3a3a" stroke-width="0.9" stroke-linejoin="round"/><path d="M356.2 207.6v-10.5l1.6-2.2l1.2-2.8l1.6 1.5l1.2-1.8l1.4 1.2l0.8 2v12.6z" fill="#3a3a3a" stroke="#3a3a3a" stroke-width="0.9" stroke-linejoin="round"/><path d="M379.2 195.9h15.8M379.2 198.7h15.8" stroke="#3a3a3a" stroke-width="1.9"/><path d="M383.2 202.4h11.8M383.2 204.4h11.8" stroke="#3a3a3a" stroke-width="0.9"/><path d="M403 195.9h15.8M403 198.7h15.8" stroke="#3a3a3a" stroke-width="1.9"/></svg>
<div class="r" style="left:16px;top:221px;width:406px;height:465px;background:#ffffff;border:1px solid #c8c8c8;box-sizing:border-box;"></div>
<div class="r" style="left:17px;top:222px;width:404px;height:36px;background:#e3e3e3;"></div>
<div class="r" style="left:45px;top:221px;width:1px;height:37px;background:#c8c8c8;"></div>
<div class="r" style="left:65px;top:221px;width:1px;height:37px;background:#c8c8c8;"></div>
<div class="r" style="left:99px;top:221px;width:1px;height:37px;background:#c8c8c8;"></div>
<div class="r" style="left:348px;top:221px;width:1px;height:37px;background:#c8c8c8;"></div>
<div class="r" style="left:396px;top:221px;width:1px;height:37px;background:#c8c8c8;"></div>
<div class="r" style="left:16px;top:258px;width:406px;height:1px;background:#c8c8c8;"></div>
<div class="t" style="left:-76px;width:600px;text-align:center;top:232.5px;font-size:12px;line-height:16px;color:#1e1e1e;font-weight:normal;">Label</div>
<div class="t" style="left:72.5px;width:600px;text-align:center;top:223.0px;font-size:12px;line-height:16px;color:#1e1e1e;font-weight:normal;">36</div>
<div class="t" style="left:73px;width:600px;text-align:center;top:242.0px;font-size:12px;line-height:16px;color:#1e1e1e;font-weight:normal;">cm</div>
<div class="r" style="left:17px;top:259px;width:28px;height:20px;background:#e3e3e3;"></div>
<div class="r" style="left:46px;top:259px;width:19px;height:20px;background:#efefef;"></div>
<div class="r" style="left:45px;top:258px;width:1px;height:21px;background:#c8c8c8;"></div>
<div class="r" style="left:65px;top:258px;width:1px;height:21px;background:#c8c8c8;"></div>
<div class="r" style="left:99px;top:258px;width:1px;height:21px;background:#c8c8c8;"></div>
<div class="r" style="left:348px;top:258px;width:1px;height:21px;background:#c8c8c8;"></div>
<div class="r" style="left:396px;top:258px;width:1px;height:21px;background:#c8c8c8;"></div>
<div class="r" style="left:16px;top:279px;width:406px;height:1px;background:#c8c8c8;"></div>
<svg class="r" style="left:18px;top:260px" width="6" height="6"><circle cx="0.7" cy="0.7" r="0.6" fill="#aaa"/><circle cx="3" cy="0.7" r="0.6" fill="#aaa"/><circle cx="5.3" cy="0.7" r="0.6" fill="#aaa"/><circle cx="0.7" cy="3" r="0.6" fill="#aaa"/><circle cx="3" cy="3" r="0.6" fill="#aaa"/><circle cx="0.7" cy="5.3" r="0.6" fill="#aaa"/></svg>
<div class="t" style="left:-268.5px;width:600px;text-align:center;top:261.5px;font-size:10.2px;line-height:16px;color:#1e1e1e;font-weight:normal;">1</div>
<svg class="r" style="left:51px;top:265px" width="9" height="9"><rect x="0.5" y="0.5" width="8" height="8" fill="#fff" stroke="#222"/><path d="M2.5 4.5h4M4.5 2.5v4" stroke="#222" stroke-width="1.2"/></svg>
<svg class="r" style="left:68px;top:261px" width="16" height="16"><rect x="0.5" y="0.5" width="15" height="15" fill="#8f8a47" stroke="#2a2a2a"/><circle cx="11.5" cy="4" r="3.2" fill="#fff"/><path d="M9.8 4l1.2 1.3l2.3-2.8" stroke="#222" stroke-width="1" fill="none"/></svg>
<div class="t" style="left:104px;top:261.0px;font-size:12px;line-height:16px;color:#1e1e1e;font-weight:normal;">Body length from high point shoulder</div>
<div class="t" style="left:-208px;width:600px;text-align:right;top:261.0px;font-size:12px;line-height:16px;color:#1e1e1e;font-weight:normal;">62</div>
<div class="r" style="left:17px;top:280px;width:28px;height:20px;background:#e3e3e3;"></div>
<div class="r" style="left:46px;top:280px;width:19px;height:20px;background:#efefef;"></div>
<div class="r" style="left:45px;top:279px;width:1px;height:21px;background:#c8c8c8;"></div>
<div class="r" style="left:65px;top:279px;width:1px;height:21px;background:#c8c8c8;"></div>
<div class="r" style="left:99px;top:279px;width:1px;height:21px;background:#c8c8c8;"></div>
<div class="r" style="left:348px;top:279px;width:1px;height:21px;background:#c8c8c8;"></div>
<div class="r" style="left:396px;top:279px;width:1px;height:21px;background:#c8c8c8;"></div>
<div class="r" style="left:16px;top:300px;width:406px;height:1px;background:#c8c8c8;"></div>
<svg class="r" style="left:18px;top:281px" width="6" height="6"><circle cx="0.7" cy="0.7" r="0.6" fill="#aaa"/><circle cx="3" cy="0.7" r="0.6" fill="#aaa"/><circle cx="5.3" cy="0.7" r="0.6" fill="#aaa"/><circle cx="0.7" cy="3" r="0.6" fill="#aaa"/><circle cx="3" cy="3" r="0.6" fill="#aaa"/><circle cx="0.7" cy="5.3" r="0.6" fill="#aaa"/></svg>
<div class="t" style="left:-268.5px;width:600px;text-align:center;top:282.5px;font-size:10.2px;line-height:16px;color:#1e1e1e;font-weight:normal;">2</div>
<svg class="r" style="left:51px;top:286px" width="9" height="9"><rect x="0.5" y="0.5" width="8" height="8" fill="#fff" stroke="#222"/><path d="M2.5 4.5h4M4.5 2.5v4" stroke="#222" stroke-width="1.2"/></svg>
<svg class="r" style="left:68px;top:282px" width="16" height="16"><rect x="0.5" y="0.5" width="15" height="15" fill="#a6f5a6" stroke="#2a2a2a"/><circle cx="11.5" cy="4" r="3.2" fill="#fff"/><path d="M9.8 4l1.2 1.3l2.3-2.8" stroke="#222" stroke-width="1" fill="none"/></svg>
<div class="t" style="left:104px;top:282.0px;font-size:12px;line-height:16px;color:#1e1e1e;font-weight:normal;">Breast width distance from high point shoul...</div>
<div class="t" style="left:-208px;width:600px;text-align:right;top:282.0px;font-size:12px;line-height:16px;color:#1e1e1e;font-weight:normal;">27</div>
<div class="r" style="left:17px;top:301px;width:28px;height:20px;background:#e3e3e3;"></div>
<div class="r" style="left:46px;top:301px;width:19px;height:20px;background:#efefef;"></div>
<div class="r" style="left:45px;top:300px;width:1px;height:21px;background:#c8c8c8;"></div>
<div class="r" style="left:65px;top:300px;width:1px;height:21px;background:#c8c8c8;"></div>
<div class="r" style="left:99px;top:300px;width:1px;height:21px;background:#c8c8c8;"></div>
<div class="r" style="left:348px;top:300px;width:1px;height:21px;background:#c8c8c8;"></div>
<div class="r" style="left:396px;top:300px;width:1px;height:21px;background:#c8c8c8;"></div>
<div class="r" style="left:16px;top:321px;width:406px;height:1px;background:#c8c8c8;"></div>
<svg class="r" style="left:18px;top:302px" width="6" height="6"><circle cx="0.7" cy="0.7" r="0.6" fill="#aaa"/><circle cx="3" cy="0.7" r="0.6" fill="#aaa"/><circle cx="5.3" cy="0.7" r="0.6" fill="#aaa"/><circle cx="0.7" cy="3" r="0.6" fill="#aaa"/><circle cx="3" cy="3" r="0.6" fill="#aaa"/><circle cx="0.7" cy="5.3" r="0.6" fill="#aaa"/></svg>
<div class="t" style="left:-268.5px;width:600px;text-align:center;top:303.5px;font-size:10.2px;line-height:16px;color:#1e1e1e;font-weight:normal;">3</div>
<svg class="r" style="left:51px;top:307px" width="9" height="9"><rect x="0.5" y="0.5" width="8" height="8" fill="#fff" stroke="#222"/><path d="M2.5 4.5h4M4.5 2.5v4" stroke="#222" stroke-width="1.2"/></svg>
<svg class="r" style="left:68px;top:303px" width="16" height="16"><rect x="0.5" y="0.5" width="15" height="15" fill="#be8434" stroke="#2a2a2a"/><circle cx="11.5" cy="4" r="3.2" fill="#fff"/><path d="M9.8 4l1.2 1.3l2.3-2.8" stroke="#222" stroke-width="1" fill="none"/></svg>
<div class="t" style="left:104px;top:303.0px;font-size:12px;line-height:16px;color:#1e1e1e;font-weight:normal;">Breast width</div>
<div class="t" style="left:-208px;width:600px;text-align:right;top:303.0px;font-size:12px;line-height:16px;color:#1e1e1e;font-weight:normal;">52</div>
<div class="r" style="left:17px;top:322px;width:28px;height:20px;background:#e3e3e3;"></div>
<div class="r" style="left:46px;top:322px;width:19px;height:20px;background:#efefef;"></div>
<div class="r" style="left:45px;top:321px;width:1px;height:21px;background:#c8c8c8;"></div>
<div class="r" style="left:65px;top:321px;width:1px;height:21px;background:#c8c8c8;"></div>
<div class="r" style="left:99px;top:321px;width:1px;height:21px;background:#c8c8c8;"></div>
<div class="r" style="left:348px;top:321px;width:1px;height:21px;background:#c8c8c8;"></div>
<div class="r" style="left:396px;top:321px;width:1px;height:21px;background:#c8c8c8;"></div>
<div class="r" style="left:16px;top:342px;width:406px;height:1px;background:#c8c8c8;"></div>
<svg class="r" style="left:18px;top:323px" width="6" height="6"><circle cx="0.7" cy="0.7" r="0.6" fill="#aaa"/><circle cx="3" cy="0.7" r="0.6" fill="#aaa"/><circle cx="5.3" cy="0.7" r="0.6" fill="#aaa"/><circle cx="0.7" cy="3" r="0.6" fill="#aaa"/><circle cx="3" cy="3" r="0.6" fill="#aaa"/><circle cx="0.7" cy="5.3" r="0.6" fill="#aaa"/></svg>
<div class="t" style="left:-268.5px;width:600px;text-align:center;top:324.5px;font-size:10.2px;line-height:16px;color:#1e1e1e;font-weight:normal;">4</div>
<svg class="r" style="left:51px;top:328px" width="9" height="9"><rect x="0.5" y="0.5" width="8" height="8" fill="#fff" stroke="#222"/><path d="M2.5 4.5h4M4.5 2.5v4" stroke="#222" stroke-width="1.2"/></svg>
<svg class="r" style="left:68px;top:324px" width="16" height="16"><rect x="0.5" y="0.5" width="15" height="15" fill="#00007a" stroke="#2a2a2a"/><circle cx="11.5" cy="4" r="3.2" fill="#fff"/><path d="M9.8 4l1.2 1.3l2.3-2.8" stroke="#222" stroke-width="1" fill="none"/></svg>
<div class="t" style="left:104px;top:324.0px;font-size:12px;line-height:16px;color:#1e1e1e;font-weight:normal;">Waistband height</div>
<div class="t" style="left:-208px;width:600px;text-align:right;top:324.0px;font-size:12px;line-height:16px;color:#1e1e1e;font-weight:normal;">5</div>
<div class="r" style="left:17px;top:343px;width:28px;height:20px;background:#e3e3e3;"></div>
<div class="r" style="left:46px;top:343px;width:19px;height:20px;background:#efefef;"></div>
<div class="r" style="left:45px;top:342px;width:1px;height:21px;background:#c8c8c8;"></div>
<div class="r" style="left:65px;top:342px;width:1px;height:21px;background:#c8c8c8;"></div>
<div class="r" style="left:99px;top:342px;width:1px;height:21px;background:#c8c8c8;"></div>
<div class="r" style="left:348px;top:342px;width:1px;height:21px;background:#c8c8c8;"></div>
<div class="r" style="left:396px;top:342px;width:1px;height:21px;background:#c8c8c8;"></div>
<div class="r" style="left:16px;top:363px;width:406px;height:1px;background:#c8c8c8;"></div>
<svg class="r" style="left:18px;top:344px" width="6" height="6"><circle cx="0.7" cy="0.7" r="0.6" fill="#aaa"/><circle cx="3" cy="0.7" r="0.6" fill="#aaa"/><circle cx="5.3" cy="0.7" r="0.6" fill="#aaa"/><circle cx="0.7" cy="3" r="0.6" fill="#aaa"/><circle cx="3" cy="3" r="0.6" fill="#aaa"/><circle cx="0.7" cy="5.3" r="0.6" fill="#aaa"/></svg>
<div class="t" style="left:-268.5px;width:600px;text-align:center;top:345.5px;font-size:10.2px;line-height:16px;color:#1e1e1e;font-weight:normal;">5</div>
<svg class="r" style="left:51px;top:349px" width="9" height="9"><rect x="0.5" y="0.5" width="8" height="8" fill="#fff" stroke="#222"/><path d="M2.5 4.5h4M4.5 2.5v4" stroke="#222" stroke-width="1.2"/></svg>
<svg class="r" style="left:68px;top:345px" width="16" height="16"><rect x="0.5" y="0.5" width="15" height="15" fill="#c9c9f7" stroke="#2a2a2a"/><circle cx="11.5" cy="4" r="3.2" fill="#fff"/><path d="M9.8 4l1.2 1.3l2.3-2.8" stroke="#222" stroke-width="1" fill="none"/></svg>
<div class="t" style="left:104px;top:345.0px;font-size:12px;line-height:16px;color:#1e1e1e;font-weight:normal;">Width above waistband/ bottom edge</div>
<div class="t" style="left:-208px;width:600px;text-align:right;top:345.0px;font-size:12px;line-height:16px;color:#1e1e1e;font-weight:normal;">48</div>
<div class="r" style="left:17px;top:364px;width:28px;height:20px;background:#e3e3e3;"></div>
<div class="r" style="left:46px;top:364px;width:19px;height:20px;background:#efefef;"></div>
<div class="r" style="left:45px;top:363px;width:1px;height:21px;background:#c8c8c8;"></div>
<div class="r" style="left:65px;top:363px;width:1px;height:21px;background:#c8c8c8;"></div>
<div class="r" style="left:99px;top:363px;width:1px;height:21px;background:#c8c8c8;"></div>
<div class="r" style="left:348px;top:363px;width:1px;height:21px;background:#c8c8c8;"></div>
<div class="r" style="left:396px;top:363px;width:1px;height:21px;background:#c8c8c8;"></div>
<div class="r" style="left:16px;top:384px;width:406px;height:1px;background:#c8c8c8;"></div>
<svg class="r" style="left:18px;top:365px" width="6" height="6"><circle cx="0.7" cy="0.7" r="0.6" fill="#aaa"/><circle cx="3" cy="0.7" r="0.6" fill="#aaa"/><circle cx="5.3" cy="0.7" r="0.6" fill="#aaa"/><circle cx="0.7" cy="3" r="0.6" fill="#aaa"/><circle cx="3" cy="3" r="0.6" fill="#aaa"/><circle cx="0.7" cy="5.3" r="0.6" fill="#aaa"/></svg>
<div class="t" style="left:-268.5px;width:600px;text-align:center;top:366.5px;font-size:10.2px;line-height:16px;color:#1e1e1e;font-weight:normal;">6</div>
<svg class="r" style="left:51px;top:370px" width="9" height="9"><rect x="0.5" y="0.5" width="8" height="8" fill="#fff" stroke="#222"/><path d="M2.5 4.5h4M4.5 2.5v4" stroke="#222" stroke-width="1.2"/></svg>
<svg class="r" style="left:68px;top:366px" width="16" height="16"><rect x="0.5" y="0.5" width="15" height="15" fill="#00e8b0" stroke="#2a2a2a"/><circle cx="11.5" cy="4" r="3.2" fill="#fff"/><path d="M9.8 4l1.2 1.3l2.3-2.8" stroke="#222" stroke-width="1" fill="none"/></svg>
<div class="t" style="left:104px;top:366.0px;font-size:12px;line-height:16px;color:#1e1e1e;font-weight:normal;">Neck horizontal</div>
<div class="t" style="left:-208px;width:600px;text-align:right;top:366.0px;font-size:12px;line-height:16px;color:#1e1e1e;font-weight:normal;">20</div>
<div class="r" style="left:17px;top:385px;width:28px;height:20px;background:#e3e3e3;"></div>
<div class="r" style="left:46px;top:385px;width:19px;height:20px;background:#efefef;"></div>
<div class="r" style="left:45px;top:384px;width:1px;height:21px;background:#c8c8c8;"></div>
<div class="r" style="left:65px;top:384px;width:1px;height:21px;background:#c8c8c8;"></div>
<div class="r" style="left:99px;top:384px;width:1px;height:21px;background:#c8c8c8;"></div>
<div class="r" style="left:348px;top:384px;width:1px;height:21px;background:#c8c8c8;"></div>
<div class="r" style="left:396px;top:384px;width:1px;height:21px;background:#c8c8c8;"></div>
<div class="r" style="left:16px;top:405px;width:406px;height:1px;background:#c8c8c8;"></div>
<svg class="r" style="left:18px;top:386px" width="6" height="6"><circle cx="0.7" cy="0.7" r="0.6" fill="#aaa"/><circle cx="3" cy="0.7" r="0.6" fill="#aaa"/><circle cx="5.3" cy="0.7" r="0.6" fill="#aaa"/><circle cx="0.7" cy="3" r="0.6" fill="#aaa"/><circle cx="3" cy="3" r="0.6" fill="#aaa"/><circle cx="0.7" cy="5.3" r="0.6" fill="#aaa"/></svg>
<div class="t" style="left:-268.5px;width:600px;text-align:center;top:387.5px;font-size:10.2px;line-height:16px;color:#1e1e1e;font-weight:normal;">7</div>
<svg class="r" style="left:51px;top:391px" width="9" height="9"><rect x="0.5" y="0.5" width="8" height="8" fill="#fff" stroke="#222"/><path d="M2.5 4.5h4M4.5 2.5v4" stroke="#222" stroke-width="1.2"/></svg>
<svg class="r" style="left:68px;top:387px" width="16" height="16"><rect x="0.5" y="0.5" width="15" height="15" fill="#c000c0" stroke="#2a2a2a"/><circle cx="11.5" cy="4" r="3.2" fill="#fff"/><path d="M9.8 4l1.2 1.3l2.3-2.8" stroke="#222" stroke-width="1" fill="none"/></svg>
<div class="t" style="left:104px;top:387.0px;font-size:12px;line-height:16px;color:#1e1e1e;font-weight:normal;">Neck drop front</div>
<div class="t" style="left:-208px;width:600px;text-align:right;top:387.0px;font-size:12px;line-height:16px;color:#1e1e1e;font-weight:normal;">8</div>
<div class="r" style="left:17px;top:406px;width:28px;height:20px;background:#e3e3e3;"></div>
<div class="r" style="left:46px;top:406px;width:19px;height:20px;background:#efefef;"></div>
<div class="r" style="left:45px;top:405px;width:1px;height:21px;background:#c8c8c8;"></div>
<div class="r" style="left:65px;top:405px;width:1px;height:21px;background:#c8c8c8;"></div>
<div class="r" style="left:99px;top:405px;width:1px;height:21px;background:#c8c8c8;"></div>
<div class="r" style="left:348px;top:405px;width:1px;height:21px;background:#c8c8c8;"></div>
<div class="r" style="left:396px;top:405px;width:1px;height:21px;background:#c8c8c8;"></div>
<div class="r" style="left:16px;top:426px;width:406px;height:1px;background:#c8c8c8;"></div>
<svg class="r" style="left:18px;top:407px" width="6" height="6"><circle cx="0.7" cy="0.7" r="0.6" fill="#aaa"/><circle cx="3" cy="0.7" r="0.6" fill="#aaa"/><circle cx="5.3" cy="0.7" r="0.6" fill="#aaa"/><circle cx="0.7" cy="3" r="0.6" fill="#aaa"/><circle cx="3" cy="3" r="0.6" fill="#aaa"/><circle cx="0.7" cy="5.3" r="0.6" fill="#aaa"/></svg>
<div class="t" style="left:-268.5px;width:600px;text-align:center;top:408.5px;font-size:10.2px;line-height:16px;color:#1e1e1e;font-weight:normal;">8</div>
<svg class="r" style="left:51px;top:412px" width="9" height="9"><rect x="0.5" y="0.5" width="8" height="8" fill="#fff" stroke="#222"/><path d="M2.5 4.5h4M4.5 2.5v4" stroke="#222" stroke-width="1.2"/></svg>
<svg class="r" style="left:68px;top:408px" width="16" height="16"><rect x="0.5" y="0.5" width="15" height="15" fill="#e0407a" stroke="#2a2a2a"/><circle cx="11.5" cy="4" r="3.2" fill="#fff"/><path d="M9.8 4l1.2 1.3l2.3-2.8" stroke="#222" stroke-width="1" fill="none"/></svg>
<div class="t" style="left:104px;top:408.0px;font-size:12px;line-height:16px;color:#1e1e1e;font-weight:normal;">Neck drop back</div>
<div class="t" style="left:-208px;width:600px;text-align:right;top:408.0px;font-size:12px;line-height:16px;color:#1e1e1e;font-weight:normal;">2</div>
<div class="r" style="left:17px;top:427px;width:28px;height:20px;background:#e3e3e3;"></div>
<div class="r" style="left:46px;top:427px;width:19px;height:20px;background:#efefef;"></div>
<div class="r" style="left:45px;top:426px;width:1px;height:21px;background:#c8c8c8;"></div>
<div class="r" style="left:65px;top:426px;width:1px;height:21px;background:#c8c8c8;"></div>
<div class="r" style="left:99px;top:426px;width:1px;height:21px;background:#c8c8c8;"></div>
<div class="r" style="left:348px;top:426px;width:1px;height:21px;background:#c8c8c8;"></div>
<div class="r" style="left:396px;top:426px;width:1px;height:21px;background:#c8c8c8;"></div>
<div class="r" style="left:16px;top:447px;width:406px;height:1px;background:#c8c8c8;"></div>
<svg class="r" style="left:18px;top:428px" width="6" height="6"><circle cx="0.7" cy="0.7" r="0.6" fill="#aaa"/><circle cx="3" cy="0.7" r="0.6" fill="#aaa"/><circle cx="5.3" cy="0.7" r="0.6" fill="#aaa"/><circle cx="0.7" cy="3" r="0.6" fill="#aaa"/><circle cx="3" cy="3" r="0.6" fill="#aaa"/><circle cx="0.7" cy="5.3" r="0.6" fill="#aaa"/></svg>
<div class="t" style="left:-268.5px;width:600px;text-align:center;top:429.5px;font-size:10.2px;line-height:16px;color:#1e1e1e;font-weight:normal;">9</div>
<svg class="r" style="left:51px;top:433px" width="9" height="9"><rect x="0.5" y="0.5" width="8" height="8" fill="#fff" stroke="#222"/><path d="M2.5 4.5h4M4.5 2.5v4" stroke="#222" stroke-width="1.2"/></svg>
<svg class="r" style="left:68px;top:429px" width="16" height="16"><rect x="0.5" y="0.5" width="15" height="15" fill="#a09a50" stroke="#2a2a2a"/><circle cx="11.5" cy="4" r="3.2" fill="#fff"/><path d="M9.8 4l1.2 1.3l2.3-2.8" stroke="#222" stroke-width="1" fill="none"/></svg>
<div class="t" style="left:104px;top:429.0px;font-size:12px;line-height:16px;color:#1e1e1e;font-weight:normal;">Shoulder</div>
<div class="t" style="left:-208px;width:600px;text-align:right;top:429.0px;font-size:12px;line-height:16px;color:#1e1e1e;font-weight:normal;">60</div>
<div class="r" style="left:17px;top:448px;width:28px;height:20px;background:#e3e3e3;"></div>
<div class="r" style="left:46px;top:448px;width:19px;height:20px;background:#efefef;"></div>
<div class="r" style="left:45px;top:447px;width:1px;height:21px;background:#c8c8c8;"></div>
<div class="r" style="left:65px;top:447px;width:1px;height:21px;background:#c8c8c8;"></div>
<div class="r" style="left:99px;top:447px;width:1px;height:21px;background:#c8c8c8;"></div>
<div class="r" style="left:348px;top:447px;width:1px;height:21px;background:#c8c8c8;"></div>
<div class="r" style="left:396px;top:447px;width:1px;height:21px;background:#c8c8c8;"></div>
<div class="r" style="left:16px;top:468px;width:406px;height:1px;background:#c8c8c8;"></div>
<svg class="r" style="left:18px;top:449px" width="6" height="6"><circle cx="0.7" cy="0.7" r="0.6" fill="#aaa"/><circle cx="3" cy="0.7" r="0.6" fill="#aaa"/><circle cx="5.3" cy="0.7" r="0.6" fill="#aaa"/><circle cx="0.7" cy="3" r="0.6" fill="#aaa"/><circle cx="3" cy="3" r="0.6" fill="#aaa"/><circle cx="0.7" cy="5.3" r="0.6" fill="#aaa"/></svg>
<div class="t" style="left:-268.5px;width:600px;text-align:center;top:450.5px;font-size:10.2px;line-height:16px;color:#1e1e1e;font-weight:normal;">10</div>
<svg class="r" style="left:51px;top:454px" width="9" height="9"><rect x="0.5" y="0.5" width="8" height="8" fill="#fff" stroke="#222"/><path d="M2.5 4.5h4M4.5 2.5v4" stroke="#222" stroke-width="1.2"/></svg>
<svg class="r" style="left:68px;top:450px" width="16" height="16"><rect x="0.5" y="0.5" width="15" height="15" fill="#007a00" stroke="#2a2a2a"/><circle cx="11.5" cy="4" r="3.2" fill="#fff"/><path d="M9.8 4l1.2 1.3l2.3-2.8" stroke="#222" stroke-width="1" fill="none"/></svg>
<div class="t" style="left:104px;top:450.0px;font-size:12px;line-height:16px;color:#1e1e1e;font-weight:normal;">Shoulder slant</div>
<div class="t" style="left:-208px;width:600px;text-align:right;top:450.0px;font-size:12px;line-height:16px;color:#1e1e1e;font-weight:normal;">7</div>
<div class="r" style="left:17px;top:469px;width:28px;height:20px;background:#e3e3e3;"></div>
<div class="r" style="left:46px;top:469px;width:19px;height:20px;background:#efefef;"></div>
<div class="r" style="left:45px;top:468px;width:1px;height:21px;background:#c8c8c8;"></div>
<div class="r" style="left:65px;top:468px;width:1px;height:21px;background:#c8c8c8;"></div>
<div class="r" style="left:99px;top:468px;width:1px;height:21px;background:#c8c8c8;"></div>
<div class="r" style="left:348px;top:468px;width:1px;height:21px;background:#c8c8c8;"></div>
<div class="r" style="left:396px;top:468px;width:1px;height:21px;background:#c8c8c8;"></div>
<div class="r" style="left:16px;top:489px;width:406px;height:1px;background:#c8c8c8;"></div>
<svg class="r" style="left:18px;top:470px" width="6" height="6"><circle cx="0.7" cy="0.7" r="0.6" fill="#aaa"/><circle cx="3" cy="0.7" r="0.6" fill="#aaa"/><circle cx="5.3" cy="0.7" r="0.6" fill="#aaa"/><circle cx="0.7" cy="3" r="0.6" fill="#aaa"/><circle cx="3" cy="3" r="0.6" fill="#aaa"/><circle cx="0.7" cy="5.3" r="0.6" fill="#aaa"/></svg>
<div class="t" style="left:-268.5px;width:600px;text-align:center;top:471.5px;font-size:10.2px;line-height:16px;color:#1e1e1e;font-weight:normal;">11</div>
<svg class="r" style="left:68px;top:471px" width="16" height="16"><rect x="0.5" y="0.5" width="15" height="15" fill="#8888f8" stroke="#2a2a2a"/><circle cx="11.5" cy="4" r="3.2" fill="#fff"/><path d="M9.8 4l1.2 1.3l2.3-2.8" stroke="#222" stroke-width="1" fill="none"/></svg>
<div class="t" style="left:104px;top:471.0px;font-size:12px;line-height:16px;color:#1e1e1e;font-weight:normal;">Sleeve length from C.B/Raglan</div>
<div class="t" style="left:-208px;width:600px;text-align:right;top:471.0px;font-size:12px;line-height:16px;color:#1e1e1e;font-weight:normal;">73</div>
<div class="r" style="left:17px;top:490px;width:28px;height:20px;background:#e3e3e3;"></div>
<div class="r" style="left:46px;top:490px;width:19px;height:20px;background:#efefef;"></div>
<div class="r" style="left:45px;top:489px;width:1px;height:21px;background:#c8c8c8;"></div>
<div class="r" style="left:65px;top:489px;width:1px;height:21px;background:#c8c8c8;"></div>
<div class="r" style="left:99px;top:489px;width:1px;height:21px;background:#c8c8c8;"></div>
<div class="r" style="left:348px;top:489px;width:1px;height:21px;background:#c8c8c8;"></div>
<div class="r" style="left:396px;top:489px;width:1px;height:21px;background:#c8c8c8;"></div>
<div class="r" style="left:16px;top:510px;width:406px;height:1px;background:#c8c8c8;"></div>
<svg class="r" style="left:18px;top:491px" width="6" height="6"><circle cx="0.7" cy="0.7" r="0.6" fill="#aaa"/><circle cx="3" cy="0.7" r="0.6" fill="#aaa"/><circle cx="5.3" cy="0.7" r="0.6" fill="#aaa"/><circle cx="0.7" cy="3" r="0.6" fill="#aaa"/><circle cx="3" cy="3" r="0.6" fill="#aaa"/><circle cx="0.7" cy="5.3" r="0.6" fill="#aaa"/></svg>
<div class="t" style="left:-268.5px;width:600px;text-align:center;top:492.5px;font-size:10.2px;line-height:16px;color:#1e1e1e;font-weight:normal;">12</div>
<svg class="r" style="left:51px;top:496px" width="9" height="9"><rect x="0.5" y="0.5" width="8" height="8" fill="#fff" stroke="#222"/><path d="M2.5 4.5h4M4.5 2.5v4" stroke="#222" stroke-width="1.2"/></svg>
<svg class="r" style="left:68px;top:492px" width="16" height="16"><rect x="0.5" y="0.5" width="15" height="15" fill="#c08af0" stroke="#2a2a2a"/><circle cx="11.5" cy="4" r="3.2" fill="#fff"/><path d="M9.8 4l1.2 1.3l2.3-2.8" stroke="#222" stroke-width="1" fill="none"/></svg>
<div class="t" style="left:104px;top:492.0px;font-size:12px;line-height:16px;color:#1e1e1e;font-weight:normal;">Muscle width</div>
<div class="t" style="left:-208px;width:600px;text-align:right;top:492.0px;font-size:12px;line-height:16px;color:#1e1e1e;font-weight:normal;">17</div>
<div class="r" style="left:17px;top:511px;width:28px;height:20px;background:#e3e3e3;"></div>
<div class="r" style="left:46px;top:511px;width:19px;height:20px;background:#efefef;"></div>
<div class="r" style="left:45px;top:510px;width:1px;height:21px;background:#c8c8c8;"></div>
<div class="r" style="left:65px;top:510px;width:1px;height:21px;background:#c8c8c8;"></div>
<div class="r" style="left:99px;top:510px;width:1px;height:21px;background:#c8c8c8;"></div>
<div class="r" style="left:348px;top:510px;width:1px;height:21px;background:#c8c8c8;"></div>
<div class="r" style="left:396px;top:510px;width:1px;height:21px;background:#c8c8c8;"></div>
<div class="r" style="left:16px;top:531px;width:406px;height:1px;background:#c8c8c8;"></div>
<svg class="r" style="left:18px;top:512px" width="6" height="6"><circle cx="0.7" cy="0.7" r="0.6" fill="#aaa"/><circle cx="3" cy="0.7" r="0.6" fill="#aaa"/><circle cx="5.3" cy="0.7" r="0.6" fill="#aaa"/><circle cx="0.7" cy="3" r="0.6" fill="#aaa"/><circle cx="3" cy="3" r="0.6" fill="#aaa"/><circle cx="0.7" cy="5.3" r="0.6" fill="#aaa"/></svg>
<div class="t" style="left:-268.5px;width:600px;text-align:center;top:513.5px;font-size:10.2px;line-height:16px;color:#1e1e1e;font-weight:normal;">13</div>
<svg class="r" style="left:68px;top:513px" width="16" height="16"><rect x="0.5" y="0.5" width="15" height="15" fill="#5a5af8" stroke="#2a2a2a"/><circle cx="11.5" cy="4" r="3.2" fill="#fff"/><path d="M9.8 4l1.2 1.3l2.3-2.8" stroke="#222" stroke-width="1" fill="none"/></svg>
<div class="t" style="left:104px;top:513.0px;font-size:12px;line-height:16px;color:#1e1e1e;font-weight:normal;">Sleeve edge</div>
<div class="t" style="left:-208px;width:600px;text-align:right;top:513.0px;font-size:12px;line-height:16px;color:#1e1e1e;font-weight:normal;">8.5</div>
<div class="r" style="left:17px;top:532px;width:28px;height:20px;background:#e3e3e3;"></div>
<div class="r" style="left:46px;top:532px;width:19px;height:20px;background:#efefef;"></div>
<div class="r" style="left:45px;top:531px;width:1px;height:21px;background:#c8c8c8;"></div>
<div class="r" style="left:65px;top:531px;width:1px;height:21px;background:#c8c8c8;"></div>
<div class="r" style="left:99px;top:531px;width:1px;height:21px;background:#c8c8c8;"></div>
<div class="r" style="left:348px;top:531px;width:1px;height:21px;background:#c8c8c8;"></div>
<div class="r" style="left:396px;top:531px;width:1px;height:21px;background:#c8c8c8;"></div>
<div class="r" style="left:16px;top:552px;width:406px;height:1px;background:#c8c8c8;"></div>
<svg class="r" style="left:18px;top:533px" width="6" height="6"><circle cx="0.7" cy="0.7" r="0.6" fill="#aaa"/><circle cx="3" cy="0.7" r="0.6" fill="#aaa"/><circle cx="5.3" cy="0.7" r="0.6" fill="#aaa"/><circle cx="0.7" cy="3" r="0.6" fill="#aaa"/><circle cx="3" cy="3" r="0.6" fill="#aaa"/><circle cx="0.7" cy="5.3" r="0.6" fill="#aaa"/></svg>
<div class="t" style="left:-268.5px;width:600px;text-align:center;top:534.5px;font-size:10.2px;line-height:16px;color:#1e1e1e;font-weight:normal;">14</div>
<svg class="r" style="left:51px;top:538px" width="9" height="9"><rect x="0.5" y="0.5" width="8" height="8" fill="#fff" stroke="#222"/><path d="M2.5 4.5h4M4.5 2.5v4" stroke="#222" stroke-width="1.2"/></svg>
<svg class="r" style="left:68px;top:534px" width="16" height="16"><rect x="0.5" y="0.5" width="15" height="15" fill="#000080" stroke="#2a2a2a"/><circle cx="11.5" cy="4" r="3.2" fill="#fff"/><path d="M9.8 4l1.2 1.3l2.3-2.8" stroke="#222" stroke-width="1" fill="none"/></svg>
<div class="t" style="left:104px;top:534.0px;font-size:12px;line-height:16px;color:#1e1e1e;font-weight:normal;">dist.of sleeve width from edge</div>
<div class="t" style="left:-208px;width:600px;text-align:right;top:534.0px;font-size:12px;line-height:16px;color:#1e1e1e;font-weight:normal;">20</div>
<div class="r" style="left:17px;top:553px;width:28px;height:20px;background:#e3e3e3;"></div>
<div class="r" style="left:46px;top:553px;width:19px;height:20px;background:#efefef;"></div>
<div class="r" style="left:45px;top:552px;width:1px;height:21px;background:#c8c8c8;"></div>
<div class="r" style="left:65px;top:552px;width:1px;height:21px;background:#c8c8c8;"></div>
<div class="r" style="left:99px;top:552px;width:1px;height:21px;background:#c8c8c8;"></div>
<div class="r" style="left:348px;top:552px;width:1px;height:21px;background:#c8c8c8;"></div>
<div class="r" style="left:396px;top:552px;width:1px;height:21px;background:#c8c8c8;"></div>
<div class="r" style="left:16px;top:573px;width:406px;height:1px;background:#c8c8c8;"></div>
<svg class="r" style="left:18px;top:554px" width="6" height="6"><circle cx="0.7" cy="0.7" r="0.6" fill="#aaa"/><circle cx="3" cy="0.7" r="0.6" fill="#aaa"/><circle cx="5.3" cy="0.7" r="0.6" fill="#aaa"/><circle cx="0.7" cy="3" r="0.6" fill="#aaa"/><circle cx="3" cy="3" r="0.6" fill="#aaa"/><circle cx="0.7" cy="5.3" r="0.6" fill="#aaa"/></svg>
<div class="t" style="left:-268.5px;width:600px;text-align:center;top:555.5px;font-size:10.2px;line-height:16px;color:#1e1e1e;font-weight:normal;">15</div>
<svg class="r" style="left:68px;top:555px" width="16" height="16"><rect x="0.5" y="0.5" width="15" height="15" fill="#000080" stroke="#2a2a2a"/><circle cx="11.5" cy="4" r="3.2" fill="#fff"/><path d="M9.8 4l1.2 1.3l2.3-2.8" stroke="#222" stroke-width="1" fill="none"/></svg>
<div class="t" style="left:104px;top:555.0px;font-size:12px;line-height:16px;color:#1e1e1e;font-weight:normal;">sleeve width</div>
<div class="t" style="left:-208px;width:600px;text-align:right;top:555.0px;font-size:12px;line-height:16px;color:#1e1e1e;font-weight:normal;">13</div>
<div class="r" style="left:17px;top:574px;width:28px;height:20px;background:#e3e3e3;"></div>
<div class="r" style="left:46px;top:574px;width:19px;height:20px;background:#efefef;"></div>
<div class="r" style="left:45px;top:573px;width:1px;height:21px;background:#c8c8c8;"></div>
<div class="r" style="left:65px;top:573px;width:1px;height:21px;background:#c8c8c8;"></div>
<div class="r" style="left:99px;top:573px;width:1px;height:21px;background:#c8c8c8;"></div>
<div class="r" style="left:348px;top:573px;width:1px;height:21px;background:#c8c8c8;"></div>
<div class="r" style="left:396px;top:573px;width:1px;height:21px;background:#c8c8c8;"></div>
<div class="r" style="left:16px;top:594px;width:406px;height:1px;background:#c8c8c8;"></div>
<svg class="r" style="left:18px;top:575px" width="6" height="6"><circle cx="0.7" cy="0.7" r="0.6" fill="#aaa"/><circle cx="3" cy="0.7" r="0.6" fill="#aaa"/><circle cx="5.3" cy="0.7" r="0.6" fill="#aaa"/><circle cx="0.7" cy="3" r="0.6" fill="#aaa"/><circle cx="3" cy="3" r="0.6" fill="#aaa"/><circle cx="0.7" cy="5.3" r="0.6" fill="#aaa"/></svg>
<div class="t" style="left:-268.5px;width:600px;text-align:center;top:576.5px;font-size:10.2px;line-height:16px;color:#1e1e1e;font-weight:normal;">16</div>
<svg class="r" style="left:51px;top:580px" width="9" height="9"><rect x="0.5" y="0.5" width="8" height="8" fill="#fff" stroke="#222"/><path d="M2.5 4.5h4M4.5 2.5v4" stroke="#222" stroke-width="1.2"/></svg>
<svg class="r" style="left:68px;top:576px" width="16" height="16"><rect x="0.5" y="0.5" width="15" height="15" fill="#007a00" stroke="#2a2a2a"/><circle cx="11.5" cy="4" r="3.2" fill="#fff"/><path d="M9.8 4l1.2 1.3l2.3-2.8" stroke="#222" stroke-width="1" fill="none"/></svg>
<div class="t" style="left:104px;top:576.0px;font-size:12px;line-height:16px;color:#1e1e1e;font-weight:normal;">Cuff height - Bundh&ouml;he im &Auml;rmel</div>
<div class="t" style="left:-208px;width:600px;text-align:right;top:576.0px;font-size:12px;line-height:16px;color:#1e1e1e;font-weight:normal;">5</div>
<div class="r" style="left:17px;top:595px;width:28px;height:20px;background:#e3e3e3;"></div>
<div class="r" style="left:46px;top:595px;width:19px;height:20px;background:#efefef;"></div>
<div class="r" style="left:45px;top:594px;width:1px;height:21px;background:#c8c8c8;"></div>
<div class="r" style="left:65px;top:594px;width:1px;height:21px;background:#c8c8c8;"></div>
<div class="r" style="left:99px;top:594px;width:1px;height:21px;background:#c8c8c8;"></div>
<div class="r" style="left:348px;top:594px;width:1px;height:21px;background:#c8c8c8;"></div>
<div class="r" style="left:396px;top:594px;width:1px;height:21px;background:#c8c8c8;"></div>
<div class="r" style="left:16px;top:615px;width:406px;height:1px;background:#c8c8c8;"></div>
<svg class="r" style="left:18px;top:596px" width="6" height="6"><circle cx="0.7" cy="0.7" r="0.6" fill="#aaa"/><circle cx="3" cy="0.7" r="0.6" fill="#aaa"/><circle cx="5.3" cy="0.7" r="0.6" fill="#aaa"/><circle cx="0.7" cy="3" r="0.6" fill="#aaa"/><circle cx="3" cy="3" r="0.6" fill="#aaa"/><circle cx="0.7" cy="5.3" r="0.6" fill="#aaa"/></svg>
<div class="t" style="left:-268.5px;width:600px;text-align:center;top:597.5px;font-size:10.2px;line-height:16px;color:#1e1e1e;font-weight:normal;">17</div>
<svg class="r" style="left:51px;top:601px" width="9" height="9"><rect x="0.5" y="0.5" width="8" height="8" fill="#fff" stroke="#222"/><path d="M2.5 4.5h4M4.5 2.5v4" stroke="#222" stroke-width="1.2"/></svg>
<svg class="r" style="left:68px;top:597px" width="16" height="16"><rect x="0.5" y="0.5" width="15" height="15" fill="#ffc040" stroke="#2a2a2a"/><circle cx="11.5" cy="4" r="3.2" fill="#fff"/><path d="M9.8 4l1.2 1.3l2.3-2.8" stroke="#222" stroke-width="1" fill="none"/></svg>
<div class="t" style="left:104px;top:597.0px;font-size:12px;line-height:16px;color:#1e1e1e;font-weight:normal;">Collar height C.B - Kragenl&auml;nge</div>
<div class="t" style="left:-208px;width:600px;text-align:right;top:597.0px;font-size:12px;line-height:16px;color:#1e1e1e;font-weight:normal;">3</div>
<div class="r" style="left:17px;top:616px;width:28px;height:20px;background:#e3e3e3;"></div>
<div class="r" style="left:46px;top:616px;width:19px;height:20px;background:#efefef;"></div>
<div class="r" style="left:45px;top:615px;width:1px;height:21px;background:#c8c8c8;"></div>
<div class="r" style="left:65px;top:615px;width:1px;height:21px;background:#c8c8c8;"></div>
<div class="r" style="left:99px;top:615px;width:1px;height:21px;background:#c8c8c8;"></div>
<div class="r" style="left:348px;top:615px;width:1px;height:21px;background:#c8c8c8;"></div>
<div class="r" style="left:396px;top:615px;width:1px;height:21px;background:#c8c8c8;"></div>
<div class="r" style="left:16px;top:636px;width:406px;height:1px;background:#c8c8c8;"></div>
<svg class="r" style="left:18px;top:617px" width="6" height="6"><circle cx="0.7" cy="0.7" r="0.6" fill="#aaa"/><circle cx="3" cy="0.7" r="0.6" fill="#aaa"/><circle cx="5.3" cy="0.7" r="0.6" fill="#aaa"/><circle cx="0.7" cy="3" r="0.6" fill="#aaa"/><circle cx="3" cy="3" r="0.6" fill="#aaa"/><circle cx="0.7" cy="5.3" r="0.6" fill="#aaa"/></svg>
<div class="t" style="left:-268.5px;width:600px;text-align:center;top:618.5px;font-size:10.2px;line-height:16px;color:#1e1e1e;font-weight:normal;">18</div>
<svg class="r" style="left:51px;top:622px" width="9" height="9"><rect x="0.5" y="0.5" width="8" height="8" fill="#fff" stroke="#222"/><path d="M2.5 4.5h4M4.5 2.5v4" stroke="#222" stroke-width="1.2"/></svg>
<svg class="r" style="left:68px;top:618px" width="16" height="16"><rect x="0.5" y="0.5" width="15" height="15" fill="#e8aa60" stroke="#2a2a2a"/><circle cx="11.5" cy="4" r="3.2" fill="#fff"/><path d="M9.8 4l1.2 1.3l2.3-2.8" stroke="#222" stroke-width="1" fill="none"/></svg>
<div class="t" style="left:104px;top:618.0px;font-size:12px;line-height:16px;color:#1e1e1e;font-weight:normal;">Helpmeasurement Neck front</div>
<div class="t" style="left:-208px;width:600px;text-align:right;top:618.0px;font-size:12px;line-height:16px;color:#1e1e1e;font-weight:normal;">10</div>
<div class="r" style="left:17px;top:637px;width:28px;height:20px;background:#e3e3e3;"></div>
<div class="r" style="left:46px;top:637px;width:19px;height:20px;background:#efefef;"></div>
<div class="r" style="left:45px;top:636px;width:1px;height:21px;background:#c8c8c8;"></div>
<div class="r" style="left:65px;top:636px;width:1px;height:21px;background:#c8c8c8;"></div>
<div class="r" style="left:99px;top:636px;width:1px;height:21px;background:#c8c8c8;"></div>
<div class="r" style="left:348px;top:636px;width:1px;height:21px;background:#c8c8c8;"></div>
<div class="r" style="left:396px;top:636px;width:1px;height:21px;background:#c8c8c8;"></div>
<div class="r" style="left:16px;top:657px;width:406px;height:1px;background:#c8c8c8;"></div>
<svg class="r" style="left:18px;top:638px" width="6" height="6"><circle cx="0.7" cy="0.7" r="0.6" fill="#aaa"/><circle cx="3" cy="0.7" r="0.6" fill="#aaa"/><circle cx="5.3" cy="0.7" r="0.6" fill="#aaa"/><circle cx="0.7" cy="3" r="0.6" fill="#aaa"/><circle cx="3" cy="3" r="0.6" fill="#aaa"/><circle cx="0.7" cy="5.3" r="0.6" fill="#aaa"/></svg>
<div class="t" style="left:-268.5px;width:600px;text-align:center;top:639.5px;font-size:10.2px;line-height:16px;color:#1e1e1e;font-weight:normal;">19</div>
<svg class="r" style="left:51px;top:643px" width="9" height="9"><rect x="0.5" y="0.5" width="8" height="8" fill="#fff" stroke="#222"/><path d="M2.5 4.5h4M4.5 2.5v4" stroke="#222" stroke-width="1.2"/></svg>
<svg class="r" style="left:68px;top:639px" width="16" height="16"><rect x="0.5" y="0.5" width="15" height="15" fill="#8a5a20" stroke="#2a2a2a"/><circle cx="11.5" cy="4" r="3.2" fill="#fff"/><path d="M9.8 4l1.2 1.3l2.3-2.8" stroke="#222" stroke-width="1" fill="none"/></svg>
<div class="t" style="left:104px;top:639.0px;font-size:12px;line-height:16px;color:#1e1e1e;font-weight:normal;">Helpmeasurement Neck back</div>
<div class="t" style="left:-208px;width:600px;text-align:right;top:639.0px;font-size:12px;line-height:16px;color:#1e1e1e;font-weight:normal;">14</div>
<div class="r" style="left:16px;top:695px;width:407px;height:5px;background:#fbfbfb;border-radius:2px;box-shadow:0 1px 2px rgba(0,0,0,0.18);"></div>
<div class="t" style="left:-82px;width:600px;text-align:center;top:694.0px;font-size:7px;line-height:6px;color:#888;font-weight:normal;">&middot;&middot;&middot;</div>
<div class="t" style="left:16px;top:706.0px;font-size:12px;line-height:16px;color:#1e1e1e;font-weight:normal;">Formulas</div>
<div class="r" style="left:16px;top:731px;width:406px;height:291px;background:#ffffff;border:1px solid #c8c8c8;box-sizing:border-box;"></div>
<div class="r" style="left:17px;top:732px;width:404px;height:36px;background:#e3e3e3;"></div>
<div class="r" style="left:45px;top:731px;width:1px;height:37px;background:#c8c8c8;"></div>
<div class="r" style="left:65px;top:731px;width:1px;height:37px;background:#c8c8c8;"></div>
<div class="r" style="left:99px;top:731px;width:1px;height:37px;background:#c8c8c8;"></div>
<div class="r" style="left:348px;top:731px;width:1px;height:37px;background:#c8c8c8;"></div>
<div class="r" style="left:396px;top:731px;width:1px;height:37px;background:#c8c8c8;"></div>
<div class="r" style="left:16px;top:768px;width:406px;height:1px;background:#c8c8c8;"></div>
<div class="t" style="left:-76px;width:600px;text-align:center;top:742.5px;font-size:12px;line-height:16px;color:#1e1e1e;font-weight:normal;">Label</div>
<div class="t" style="left:72.5px;width:600px;text-align:center;top:733.0px;font-size:12px;line-height:16px;color:#1e1e1e;font-weight:normal;">36</div>
<div class="t" style="left:73px;width:600px;text-align:center;top:752.0px;font-size:12px;line-height:16px;color:#1e1e1e;font-weight:normal;">cm</div>
<div class="r" style="left:17px;top:769px;width:28px;height:20px;background:#e3e3e3;"></div>
<div class="r" style="left:46px;top:769px;width:19px;height:20px;background:#efefef;"></div>
<div class="r" style="left:45px;top:768px;width:1px;height:21px;background:#c8c8c8;"></div>
<div class="r" style="left:65px;top:768px;width:1px;height:21px;background:#c8c8c8;"></div>
<div class="r" style="left:99px;top:768px;width:1px;height:21px;background:#c8c8c8;"></div>
<div class="r" style="left:348px;top:768px;width:1px;height:21px;background:#c8c8c8;"></div>
<div class="r" style="left:396px;top:768px;width:1px;height:21px;background:#c8c8c8;"></div>
<div class="r" style="left:16px;top:789px;width:406px;height:1px;background:#c8c8c8;"></div>
<svg class="r" style="left:18px;top:770px" width="6" height="6"><circle cx="0.7" cy="0.7" r="0.6" fill="#aaa"/><circle cx="3" cy="0.7" r="0.6" fill="#aaa"/><circle cx="5.3" cy="0.7" r="0.6" fill="#aaa"/><circle cx="0.7" cy="3" r="0.6" fill="#aaa"/><circle cx="3" cy="3" r="0.6" fill="#aaa"/><circle cx="0.7" cy="5.3" r="0.6" fill="#aaa"/></svg>
<div class="t" style="left:-268.5px;width:600px;text-align:center;top:771.5px;font-size:10.2px;line-height:16px;color:#1e1e1e;font-weight:normal;">A</div>
<svg class="r" style="left:51px;top:775px" width="9" height="9"><rect x="0.5" y="0.5" width="8" height="8" fill="#fff" stroke="#222"/><path d="M2.5 4.5h4M4.5 2.5v4" stroke="#222" stroke-width="1.2"/></svg>
<svg class="r" style="left:68px;top:771px" width="16" height="16"><rect x="0.5" y="0.5" width="15" height="15" fill="#8a5a20" stroke="#2a2a2a"/><circle cx="11.5" cy="4" r="3.2" fill="#fff"/><path d="M9.8 4l1.2 1.3l2.3-2.8" stroke="#222" stroke-width="1" fill="none"/></svg>
<div class="t" style="left:104px;top:771.0px;font-size:12px;line-height:16px;color:#1e1e1e;font-weight:normal;">Body length - Neck drop front</div>
<div class="t" style="left:-208px;width:600px;text-align:right;top:771.0px;font-size:12px;line-height:16px;color:#1e1e1e;font-weight:normal;">54</div>
<div class="r" style="left:17px;top:790px;width:28px;height:20px;background:#e3e3e3;"></div>
<div class="r" style="left:46px;top:790px;width:19px;height:20px;background:#efefef;"></div>
<div class="r" style="left:45px;top:789px;width:1px;height:21px;background:#c8c8c8;"></div>
<div class="r" style="left:65px;top:789px;width:1px;height:21px;background:#c8c8c8;"></div>
<div class="r" style="left:99px;top:789px;width:1px;height:21px;background:#c8c8c8;"></div>
<div class="r" style="left:348px;top:789px;width:1px;height:21px;background:#c8c8c8;"></div>
<div class="r" style="left:396px;top:789px;width:1px;height:21px;background:#c8c8c8;"></div>
<div class="r" style="left:16px;top:810px;width:406px;height:1px;background:#c8c8c8;"></div>
<svg class="r" style="left:18px;top:791px" width="6" height="6"><circle cx="0.7" cy="0.7" r="0.6" fill="#aaa"/><circle cx="3" cy="0.7" r="0.6" fill="#aaa"/><circle cx="5.3" cy="0.7" r="0.6" fill="#aaa"/><circle cx="0.7" cy="3" r="0.6" fill="#aaa"/><circle cx="3" cy="3" r="0.6" fill="#aaa"/><circle cx="0.7" cy="5.3" r="0.6" fill="#aaa"/></svg>
<div class="t" style="left:-268.5px;width:600px;text-align:center;top:792.5px;font-size:10.2px;line-height:16px;color:#1e1e1e;font-weight:normal;">B</div>
<svg class="r" style="left:51px;top:796px" width="9" height="9"><rect x="0.5" y="0.5" width="8" height="8" fill="#fff" stroke="#222"/><path d="M2.5 4.5h4M4.5 2.5v4" stroke="#222" stroke-width="1.2"/></svg>
<svg class="r" style="left:68px;top:792px" width="16" height="16"><rect x="0.5" y="0.5" width="15" height="15" fill="#a6f5a6" stroke="#2a2a2a"/><circle cx="11.5" cy="4" r="3.2" fill="#fff"/><path d="M9.8 4l1.2 1.3l2.3-2.8" stroke="#222" stroke-width="1" fill="none"/></svg>
<div class="t" style="left:104px;top:792.0px;font-size:12px;line-height:16px;color:#1e1e1e;font-weight:normal;">Body length - Neck drop back</div>
<div class="t" style="left:-208px;width:600px;text-align:right;top:792.0px;font-size:12px;line-height:16px;color:#1e1e1e;font-weight:normal;">60</div>
<div class="r" style="left:17px;top:811px;width:28px;height:20px;background:#e3e3e3;"></div>
<div class="r" style="left:46px;top:811px;width:19px;height:20px;background:#efefef;"></div>
<div class="r" style="left:45px;top:810px;width:1px;height:21px;background:#c8c8c8;"></div>
<div class="r" style="left:65px;top:810px;width:1px;height:21px;background:#c8c8c8;"></div>
<div class="r" style="left:99px;top:810px;width:1px;height:21px;background:#c8c8c8;"></div>
<div class="r" style="left:348px;top:810px;width:1px;height:21px;background:#c8c8c8;"></div>
<div class="r" style="left:396px;top:810px;width:1px;height:21px;background:#c8c8c8;"></div>
<div class="r" style="left:16px;top:831px;width:406px;height:1px;background:#c8c8c8;"></div>
<svg class="r" style="left:18px;top:812px" width="6" height="6"><circle cx="0.7" cy="0.7" r="0.6" fill="#aaa"/><circle cx="3" cy="0.7" r="0.6" fill="#aaa"/><circle cx="5.3" cy="0.7" r="0.6" fill="#aaa"/><circle cx="0.7" cy="3" r="0.6" fill="#aaa"/><circle cx="3" cy="3" r="0.6" fill="#aaa"/><circle cx="0.7" cy="5.3" r="0.6" fill="#aaa"/></svg>
<div class="t" style="left:-268.5px;width:600px;text-align:center;top:813.5px;font-size:10.2px;line-height:16px;color:#1e1e1e;font-weight:normal;">C</div>
<svg class="r" style="left:51px;top:817px" width="9" height="9"><rect x="0.5" y="0.5" width="8" height="8" fill="#fff" stroke="#222"/><path d="M2.5 4.5h4M4.5 2.5v4" stroke="#222" stroke-width="1.2"/></svg>
<svg class="r" style="left:68px;top:813px" width="16" height="16"><rect x="0.5" y="0.5" width="15" height="15" fill="#7a7a7a" stroke="#2a2a2a"/><circle cx="11.5" cy="4" r="3.2" fill="#fff"/><path d="M9.8 4l1.2 1.3l2.3-2.8" stroke="#222" stroke-width="1" fill="none"/></svg>
<div class="t" style="left:104px;top:813.0px;font-size:12px;line-height:16px;color:#1e1e1e;font-weight:normal;">Neck horizontal *2-4</div>
<div class="t" style="left:-208px;width:600px;text-align:right;top:813.0px;font-size:12px;line-height:16px;color:#1e1e1e;font-weight:normal;">36</div>
<div class="r" style="left:17px;top:832px;width:28px;height:20px;background:#e3e3e3;"></div>
<div class="r" style="left:46px;top:832px;width:19px;height:20px;background:#efefef;"></div>
<div class="r" style="left:45px;top:831px;width:1px;height:21px;background:#c8c8c8;"></div>
<div class="r" style="left:65px;top:831px;width:1px;height:21px;background:#c8c8c8;"></div>
<div class="r" style="left:99px;top:831px;width:1px;height:21px;background:#c8c8c8;"></div>
<div class="r" style="left:348px;top:831px;width:1px;height:21px;background:#c8c8c8;"></div>
<div class="r" style="left:396px;top:831px;width:1px;height:21px;background:#c8c8c8;"></div>
<div class="r" style="left:16px;top:852px;width:406px;height:1px;background:#c8c8c8;"></div>
<svg class="r" style="left:18px;top:833px" width="6" height="6"><circle cx="0.7" cy="0.7" r="0.6" fill="#aaa"/><circle cx="3" cy="0.7" r="0.6" fill="#aaa"/><circle cx="5.3" cy="0.7" r="0.6" fill="#aaa"/><circle cx="0.7" cy="3" r="0.6" fill="#aaa"/><circle cx="3" cy="3" r="0.6" fill="#aaa"/><circle cx="0.7" cy="5.3" r="0.6" fill="#aaa"/></svg>
<div class="t" style="left:-268.5px;width:600px;text-align:center;top:834.5px;font-size:10.2px;line-height:16px;color:#1e1e1e;font-weight:normal;">D</div>
<svg class="r" style="left:51px;top:838px" width="9" height="9"><rect x="0.5" y="0.5" width="8" height="8" fill="#fff" stroke="#222"/><path d="M2.5 4.5h4M4.5 2.5v4" stroke="#222" stroke-width="1.2"/></svg>
<svg class="r" style="left:68px;top:834px" width="16" height="16"><rect x="0.5" y="0.5" width="15" height="15" fill="#a8a8e8" stroke="#2a2a2a"/><circle cx="11.5" cy="4" r="3.2" fill="#fff"/><path d="M9.8 4l1.2 1.3l2.3-2.8" stroke="#222" stroke-width="1" fill="none"/></svg>
<div class="t" style="left:104px;top:834.0px;font-size:12px;line-height:16px;color:#1e1e1e;font-weight:normal;">Sleeve length - 30</div>
<div class="t" style="left:-208px;width:600px;text-align:right;top:834.0px;font-size:12px;line-height:16px;color:#1e1e1e;font-weight:normal;">43</div>
<div class="r" style="left:17px;top:853px;width:28px;height:20px;background:#e3e3e3;"></div>
<div class="r" style="left:46px;top:853px;width:19px;height:20px;background:#efefef;"></div>
<div class="r" style="left:45px;top:852px;width:1px;height:21px;background:#c8c8c8;"></div>
<div class="r" style="left:65px;top:852px;width:1px;height:21px;background:#c8c8c8;"></div>
<div class="r" style="left:99px;top:852px;width:1px;height:21px;background:#c8c8c8;"></div>
<div class="r" style="left:348px;top:852px;width:1px;height:21px;background:#c8c8c8;"></div>
<div class="r" style="left:396px;top:852px;width:1px;height:21px;background:#c8c8c8;"></div>
<div class="r" style="left:16px;top:873px;width:406px;height:1px;background:#c8c8c8;"></div>
<svg class="r" style="left:18px;top:854px" width="6" height="6"><circle cx="0.7" cy="0.7" r="0.6" fill="#aaa"/><circle cx="3" cy="0.7" r="0.6" fill="#aaa"/><circle cx="5.3" cy="0.7" r="0.6" fill="#aaa"/><circle cx="0.7" cy="3" r="0.6" fill="#aaa"/><circle cx="3" cy="3" r="0.6" fill="#aaa"/><circle cx="0.7" cy="5.3" r="0.6" fill="#aaa"/></svg>
<div class="t" style="left:-268.5px;width:600px;text-align:center;top:855.5px;font-size:10.2px;line-height:16px;color:#1e1e1e;font-weight:normal;">E</div>
<svg class="r" style="left:51px;top:859px" width="9" height="9"><rect x="0.5" y="0.5" width="8" height="8" fill="#fff" stroke="#222"/><path d="M2.5 4.5h4M4.5 2.5v4" stroke="#222" stroke-width="1.2"/></svg>
<svg class="r" style="left:68px;top:855px" width="16" height="16"><rect x="0.5" y="0.5" width="15" height="15" fill="#000080" stroke="#2a2a2a"/><circle cx="11.5" cy="4" r="3.2" fill="#fff"/><path d="M9.8 4l1.2 1.3l2.3-2.8" stroke="#222" stroke-width="1" fill="none"/></svg>
<div class="t" style="left:104px;top:855.0px;font-size:12px;line-height:16px;color:#1e1e1e;font-weight:normal;">Sleeve length - dist.of sleeve width from edge</div>
<div class="t" style="left:-208px;width:600px;text-align:right;top:855.0px;font-size:12px;line-height:16px;color:#1e1e1e;font-weight:normal;">23</div>
<div class="r" style="left:17px;top:874px;width:28px;height:20px;background:#e3e3e3;"></div>
<div class="r" style="left:46px;top:874px;width:19px;height:20px;background:#efefef;"></div>
<div class="r" style="left:45px;top:873px;width:1px;height:21px;background:#c8c8c8;"></div>
<div class="r" style="left:65px;top:873px;width:1px;height:21px;background:#c8c8c8;"></div>
<div class="r" style="left:99px;top:873px;width:1px;height:21px;background:#c8c8c8;"></div>
<div class="r" style="left:348px;top:873px;width:1px;height:21px;background:#c8c8c8;"></div>
<div class="r" style="left:396px;top:873px;width:1px;height:21px;background:#c8c8c8;"></div>
<div class="r" style="left:16px;top:894px;width:406px;height:1px;background:#c8c8c8;"></div>
<svg class="r" style="left:18px;top:875px" width="6" height="6"><circle cx="0.7" cy="0.7" r="0.6" fill="#aaa"/><circle cx="3" cy="0.7" r="0.6" fill="#aaa"/><circle cx="5.3" cy="0.7" r="0.6" fill="#aaa"/><circle cx="0.7" cy="3" r="0.6" fill="#aaa"/><circle cx="3" cy="3" r="0.6" fill="#aaa"/><circle cx="0.7" cy="5.3" r="0.6" fill="#aaa"/></svg>
<div class="t" style="left:-268.5px;width:600px;text-align:center;top:876.5px;font-size:10.2px;line-height:16px;color:#1e1e1e;font-weight:normal;">F</div>
<svg class="r" style="left:51px;top:880px" width="9" height="9"><rect x="0.5" y="0.5" width="8" height="8" fill="#fff" stroke="#222"/><path d="M2.5 4.5h4M4.5 2.5v4" stroke="#222" stroke-width="1.2"/></svg>
<svg class="r" style="left:68px;top:876px" width="16" height="16"><rect x="0.5" y="0.5" width="15" height="15" fill="#000080" stroke="#2a2a2a"/><circle cx="11.5" cy="4" r="3.2" fill="#fff"/><path d="M9.8 4l1.2 1.3l2.3-2.8" stroke="#222" stroke-width="1" fill="none"/></svg>
<div class="t" style="left:104px;top:876.0px;font-size:12px;line-height:16px;color:#1e1e1e;font-weight:normal;">Muscle width*2</div>
<div class="t" style="left:-208px;width:600px;text-align:right;top:876.0px;font-size:12px;line-height:16px;color:#1e1e1e;font-weight:normal;">34</div>
<div class="r" style="left:17px;top:895px;width:404px;height:20px;background:#1e88d6;"></div>
<div class="r" style="left:45px;top:894px;width:1px;height:21px;background:#8ec3ea;"></div>
<div class="r" style="left:65px;top:894px;width:1px;height:21px;background:#8ec3ea;"></div>
<div class="r" style="left:99px;top:894px;width:1px;height:21px;background:#8ec3ea;"></div>
<div class="r" style="left:348px;top:894px;width:1px;height:21px;background:#8ec3ea;"></div>
<div class="r" style="left:396px;top:894px;width:1px;height:21px;background:#8ec3ea;"></div>
<div class="r" style="left:16px;top:915px;width:406px;height:1px;background:#c8c8c8;"></div>
<svg class="r" style="left:18px;top:896px" width="6" height="6"><circle cx="0.7" cy="0.7" r="0.6" fill="#cde"/><circle cx="3" cy="0.7" r="0.6" fill="#cde"/><circle cx="5.3" cy="0.7" r="0.6" fill="#cde"/><circle cx="0.7" cy="3" r="0.6" fill="#cde"/><circle cx="3" cy="3" r="0.6" fill="#cde"/><circle cx="0.7" cy="5.3" r="0.6" fill="#cde"/></svg>
<div class="t" style="left:-268.5px;width:600px;text-align:center;top:897.5px;font-size:10.2px;line-height:16px;color:#ffffff;font-weight:normal;">G</div>
<svg class="r" style="left:51px;top:901px" width="9" height="9"><rect x="0.5" y="0.5" width="8" height="8" fill="#1e88d6" stroke="#222"/><path d="M2.5 4.5h4" stroke="#222" stroke-width="1.2"/></svg>
<svg class="r" style="left:68px;top:897px" width="16" height="16"><rect x="0.5" y="0.5" width="15" height="15" fill="#80e000" stroke="#2a2a2a"/><circle cx="11.5" cy="4" r="3.2" fill="#fff"/><path d="M9.8 4l1.2 1.3l2.3-2.8" stroke="#222" stroke-width="1" fill="none"/></svg>
<div class="t" style="left:104px;top:897.0px;font-size:12px;line-height:16px;color:#ffffff;font-weight:bold;">Sleeve edge*2</div>
<div class="t" style="left:-208px;width:600px;text-align:right;top:897.0px;font-size:12px;line-height:16px;color:#ffffff;font-weight:bold;">17</div>
<div class="r" style="left:17px;top:916px;width:331px;height:20px;background:#efefef;"></div>
<div class="r" style="left:17px;top:916px;width:28px;height:20px;background:#e3e3e3;"></div>
<div class="r" style="left:45px;top:915px;width:1px;height:21px;background:#c8c8c8;"></div>
<div class="r" style="left:348px;top:915px;width:1px;height:21px;background:#c8c8c8;"></div>
<div class="r" style="left:396px;top:915px;width:1px;height:21px;background:#c8c8c8;"></div>
<div class="r" style="left:16px;top:936px;width:406px;height:1px;background:#c8c8c8;"></div>
<div class="r" style="left:55px;top:915px;width:0;height:17px;border-left:1px dotted #555;"></div>
<div class="r" style="left:55px;top:931px;width:9px;height:0;border-top:1px dotted #555;"></div>
<svg class="r" style="left:100px;top:915px" width="20" height="21" viewBox="100 915 20 21"><path d="M105 926.0h8" stroke="#333" stroke-width="1"/><path d="M104 926.0l2.6-2.2v4.4zM114 926.0l-2.6-2.2v4.4z" fill="#333"/></svg>
<div class="t" style="left:122px;top:918.0px;font-size:12px;line-height:16px;color:#1e1e1e;font-weight:normal;">Sleeve</div>
<div class="t" style="left:-208px;width:600px;text-align:right;top:918.0px;font-size:12px;line-height:16px;color:#2222c8;font-weight:normal;">17</div>
<div class="r" style="left:17px;top:937px;width:28px;height:20px;background:#e3e3e3;"></div>
<div class="r" style="left:46px;top:937px;width:19px;height:20px;background:#efefef;"></div>
<div class="r" style="left:45px;top:936px;width:1px;height:21px;background:#c8c8c8;"></div>
<div class="r" style="left:65px;top:936px;width:1px;height:21px;background:#c8c8c8;"></div>
<div class="r" style="left:99px;top:936px;width:1px;height:21px;background:#c8c8c8;"></div>
<div class="r" style="left:348px;top:936px;width:1px;height:21px;background:#c8c8c8;"></div>
<div class="r" style="left:396px;top:936px;width:1px;height:21px;background:#c8c8c8;"></div>
<div class="r" style="left:16px;top:957px;width:406px;height:1px;background:#c8c8c8;"></div>
<svg class="r" style="left:18px;top:938px" width="6" height="6"><circle cx="0.7" cy="0.7" r="0.6" fill="#aaa"/><circle cx="3" cy="0.7" r="0.6" fill="#aaa"/><circle cx="5.3" cy="0.7" r="0.6" fill="#aaa"/><circle cx="0.7" cy="3" r="0.6" fill="#aaa"/><circle cx="3" cy="3" r="0.6" fill="#aaa"/><circle cx="0.7" cy="5.3" r="0.6" fill="#aaa"/></svg>
<div class="t" style="left:-268.5px;width:600px;text-align:center;top:939.5px;font-size:10.2px;line-height:16px;color:#1e1e1e;font-weight:normal;">H</div>
<svg class="r" style="left:51px;top:943px" width="9" height="9"><rect x="0.5" y="0.5" width="8" height="8" fill="#fff" stroke="#222"/><path d="M2.5 4.5h4M4.5 2.5v4" stroke="#222" stroke-width="1.2"/></svg>
<svg class="r" style="left:68px;top:939px" width="16" height="16"><rect x="0.5" y="0.5" width="15" height="15" fill="#c08af0" stroke="#2a2a2a"/><circle cx="11.5" cy="4" r="3.2" fill="#fff"/><path d="M9.8 4l1.2 1.3l2.3-2.8" stroke="#222" stroke-width="1" fill="none"/></svg>
<div class="t" style="left:104px;top:939.0px;font-size:12px;line-height:16px;color:#1e1e1e;font-weight:normal;">Sleeve width*2</div>
<div class="t" style="left:-208px;width:600px;text-align:right;top:939.0px;font-size:12px;line-height:16px;color:#1e1e1e;font-weight:normal;">26</div>
<div class="r" style="left:439px;top:155px;width:107px;height:23px;background:#d6d7db;"></div>
<svg class="r" style="left:440px;top:154px" width="24" height="24" viewBox="440 154 24 24"><path d="M447.3 158h4.5l1.4 3.6l1.5-3.6h4.3l0.2 4.8l1.7 2v9.1h-15.9v-9.1l1.9-2z" fill="#3a3a3a"/><path d="M448 170.7h11" stroke="#fff" stroke-width="1.1"/><path d="M446.2 170.7l2.8-2.3v4.6zM459.8 170.7l-2.8-2.3v4.6z" fill="#fff"/></svg>
<div class="t" style="left:466px;top:158.0px;font-size:12px;line-height:16px;color:#1e1e1e;font-weight:normal;">Dimensioning</div>
<div class="r" style="left:439px;top:176px;width:1473px;height:2px;background:#d0d0d0;"></div>
<svg class="r" style="left:1898px;top:163px;" width="10" height="7" viewBox="0 0 10 7"><path d="M1 1l4 4l4-4" stroke="#555" stroke-width="1.1" fill="none"/></svg>
<div class="r" style="left:439px;top:178px;width:1453px;height:808px;background:#ffffff;"></div>
<div class="r" style="left:439px;top:178px;width:1px;height:808px;background:#d0d0d0;"></div>
<svg class="r" style="left:440px;top:178px;" width="8" height="11" viewBox="0 0 8 11"><rect x="0.5" y="0.5" width="6.2" height="10" fill="#fff" stroke="#333" stroke-width="1"/><path d="M0.5 0.5h6.2v10z" fill="#999"/><path d="M0.5 0.5l6.2 10" stroke="#333" stroke-width="0.8"/></svg>
<div class="r" style="left:1892px;top:178px;width:20px;height:808px;background:#6b6b6b;"></div>
<div class="r" style="left:1902px;top:190px;width:2px;height:783px;background:#4a4a4a;"></div>
<div class="r" style="left:1898px;top:223px;width:10px;height:34px;background:#4d4d4d;border-radius:5px;"></div>
<svg class="r" style="left:1896px;top:180px;" width="13" height="10" viewBox="0 0 13 10"><path d="M0.5 8.5l6-5.5l6 5.5v-3.5l-6-5l-6 5z" fill="#4a4a4a"/></svg>
<svg class="r" style="left:1896px;top:975px;" width="13" height="10" viewBox="0 0 13 10"><path d="M0.5 0.5l6 5.5l6-5.5v3.5l-6 5l-6-5z" fill="#4a4a4a"/></svg>
<div class="r" style="left:439px;top:986px;width:1473px;height:18px;background:#6b6b6b;"></div>
<div class="r" style="left:448px;top:994px;width:1433px;height:2px;background:#4a4a4a;"></div>
<div class="r" style="left:648px;top:990px;width:141px;height:10px;background:#4d4d4d;border-radius:5px;"></div>
<svg class="r" style="left:442px;top:988px;" width="10" height="13" viewBox="0 0 10 13"><path d="M9.5 0.5l-5.5 6l5.5 6h-3.5l-5-6l5-6z" fill="#4a4a4a"/></svg>
<svg class="r" style="left:1881px;top:988px;" width="10" height="13" viewBox="0 0 10 13"><path d="M0.5 0.5l5.5 6l-5.5 6h3.5l5-6l-5-6z" fill="#4a4a4a"/></svg>
<div class="r" style="left:1534px;top:188px;width:274px;height:36px;background:#e0e0e0;border-radius:3px;"></div>
<div class="r" style="left:1536px;top:206px;width:270px;height:14px;background:#ffffff;"></div>
<svg class="r" style="left:1543px;top:193px;" width="10" height="7" viewBox="0 0 10 7"><path d="M0 7l5-6l5 6z" fill="#333"/></svg>
<div class="t" style="left:1562px;top:190.0px;font-size:12px;line-height:16px;color:#2a2a2a;font-weight:normal;">Shape Elements -</div>
<div class="r" style="left:1818px;top:188px;width:22px;height:22px;background:#f2f2f2;border-radius:2px;"></div>
<svg class="r" style="left:1820px;top:190px;" width="18" height="18" viewBox="0 0 18 18"><rect x="2.5" y="2.5" width="5" height="5" stroke="#333" fill="none" stroke-width="1.1"/><rect x="2.5" y="10.5" width="5" height="5" stroke="#333" fill="none" stroke-width="1.1"/><rect x="10.5" y="10.5" width="5" height="5" stroke="#333" fill="none" stroke-width="1.1"/></svg>
<div class="r" style="left:1818px;top:216px;width:33px;height:44px;background:#42a6e6;border:1px solid #3c7fb0;box-sizing:border-box;"></div>
<div class="t" style="left:1536px;width:600px;text-align:center;top:231.0px;font-size:12px;line-height:16px;color:#ffffff;font-weight:bold;">36*</div>
<div class="r" style="left:530px;top:220px;width:627px;height:716px;background:#ffffff;border:1px solid #2d95de;box-sizing:border-box;"></div>
<div class="r" style="left:530px;top:220px;width:627px;height:23px;background:#1a8bdc;"></div>
<div class="t" style="left:543px;width:600px;text-align:center;top:223.5px;font-size:12px;line-height:16px;color:#ffffff;font-weight:bold;">Sleeve</div>
<div class="r" style="left:1138px;top:233px;width:15px;height:5px;background:#ffffff;border:1px solid #555;box-sizing:border-box;border-radius:1px;"></div>
<svg class="r" style="left:836px;top:186px;" width="15" height="36" viewBox="0 0 15 36"><circle cx="7.5" cy="8" r="5" stroke="#1a8bdc" stroke-width="2" fill="#fff"/><path d="M7.5 13v22" stroke="#1a8bdc" stroke-width="2"/></svg>
<svg class="r" style="left:0px;top:0px;pointer-events:none;" width="1919" height="1037" viewBox="0 0 1919 1037"><g fill="none" stroke="#000" stroke-width="1.35"><path d="M693.5 315.5 H1108.5"/><path d="M693.5 320.0 L693.5 337.7 L697.0 337.7 L697.0 355.5 L700.4 355.5 L700.4 373.2 L703.9 373.2 L703.9 390.9 L707.4 390.9 L707.4 408.7 L710.8 408.7 L710.8 426.4 L714.3 426.4 L714.3 444.1 L717.8 444.1 L717.8 461.9 L721.2 461.9 L721.2 479.6 L724.7 479.6 L724.7 497.3 L728.2 497.3 L728.2 515.1 L731.6 515.1 L731.6 532.8 L735.1 532.8 L735.1 550.5 L738.6 550.5 L738.6 568.3 L742.0 568.3 L742.0 586.0 L745.5 586.0"/><path d="M1108.5 320.0 L1108.5 337.7 L1105.1 337.7 L1105.1 355.5 L1101.7 355.5 L1101.7 373.2 L1098.3 373.2 L1098.3 390.9 L1094.9 390.9 L1094.9 408.7 L1091.5 408.7 L1091.5 426.4 L1088.1 426.4 L1088.1 444.1 L1084.7 444.1 L1084.7 461.9 L1081.3 461.9 L1081.3 479.6 L1077.9 479.6 L1077.9 497.3 L1074.5 497.3 L1074.5 515.1 L1071.1 515.1 L1071.1 532.8 L1067.7 532.8 L1067.7 550.5 L1064.3 550.5 L1064.3 568.3 L1060.9 568.3 L1060.9 586.0 L1057.5 586.0"/><path d="M745.5 597.0 L745.5 608.9 L749.0 608.9 L749.0 620.7 L752.4 620.7 L752.4 632.6 L755.9 632.6 L755.9 644.5 L759.4 644.5 L759.4 656.3 L762.8 656.3 L762.8 668.2 L766.3 668.2 L766.3 680.1 L769.8 680.1 L769.8 691.9 L773.2 691.9 L773.2 703.8 L776.7 703.8 L776.7 715.7 L780.2 715.7 L780.2 727.5 L783.6 727.5 L783.6 739.4 L787.1 739.4 L787.1 751.3 L790.6 751.3 L790.6 763.1 L794.0 763.1 L794.0 775.0 L797.5 775.0"/><path d="M1057.5 597.0 L1057.5 608.9 L1054.0 608.9 L1054.0 620.7 L1050.4 620.7 L1050.4 632.6 L1046.9 632.6 L1046.9 644.5 L1043.4 644.5 L1043.4 656.3 L1039.8 656.3 L1039.8 668.2 L1036.3 668.2 L1036.3 680.1 L1032.8 680.1 L1032.8 691.9 L1029.2 691.9 L1029.2 703.8 L1025.7 703.8 L1025.7 715.7 L1022.2 715.7 L1022.2 727.5 L1018.6 727.5 L1018.6 739.4 L1015.1 739.4 L1015.1 751.3 L1011.6 751.3 L1011.6 763.1 L1008.0 763.1 L1008.0 775.0 L1004.5 775.0"/></g><clipPath id="cl"><rect x="798" y="780" width="206" height="58"/></clipPath><g clip-path="url(#cl)"><rect x="800" y="781" width="4" height="57" fill="#d4d4d4"/><rect x="808" y="781" width="4" height="57" fill="#d4d4d4"/><rect x="816" y="781" width="4" height="57" fill="#d4d4d4"/><rect x="824" y="781" width="4" height="57" fill="#d4d4d4"/><rect x="832" y="781" width="4" height="57" fill="#d4d4d4"/><rect x="840" y="781" width="4" height="57" fill="#d4d4d4"/><rect x="848" y="781" width="4" height="57" fill="#d4d4d4"/><rect x="856" y="781" width="4" height="57" fill="#d4d4d4"/><rect x="864" y="781" width="4" height="57" fill="#d4d4d4"/><rect x="872" y="781" width="4" height="57" fill="#d4d4d4"/><rect x="880" y="781" width="4" height="57" fill="#d4d4d4"/><rect x="888" y="781" width="4" height="57" fill="#d4d4d4"/><rect x="896" y="781" width="4" height="57" fill="#d4d4d4"/><rect x="904" y="781" width="4" height="57" fill="#d4d4d4"/><rect x="912" y="781" width="4" height="57" fill="#d4d4d4"/><rect x="920" y="781" width="4" height="57" fill="#d4d4d4"/><rect x="928" y="781" width="4" height="57" fill="#d4d4d4"/><rect x="936" y="781" width="4" height="57" fill="#d4d4d4"/><rect x="944" y="781" width="4" height="57" fill="#d4d4d4"/><rect x="952" y="781" width="4" height="57" fill="#d4d4d4"/><rect x="960" y="781" width="4" height="57" fill="#d4d4d4"/><rect x="968" y="781" width="4" height="57" fill="#d4d4d4"/><rect x="976" y="781" width="4" height="57" fill="#d4d4d4"/><rect x="984" y="781" width="4" height="57" fill="#d4d4d4"/><rect x="992" y="781" width="4" height="57" fill="#d4d4d4"/><rect x="1000" y="781" width="4" height="57" fill="#d4d4d4"/></g><rect x="797.5" y="780.5" width="207" height="58" fill="none" stroke="#000" stroke-width="1.4"/><path d="M781 832.5h30M781 845.5h30M885 832.5h30M885 845.5h30" stroke="#333" stroke-width="1" stroke-dasharray="3 2"/><circle cx="901" cy="838.5" r="6" fill="#fff" stroke="#555" stroke-width="1.2"/><circle cx="901" cy="838.5" r="3" fill="none" stroke="#555" stroke-width="1.2"/><rect x="688.5" y="310.5" width="10" height="10" fill="#f4f4f4" stroke="#444" stroke-width="1.2"/><path d="M688.5 320.5 L698.5 310.5 L688.5 310.5z" fill="#8a8a8a" stroke="#444" stroke-width="0.8"/><rect x="1103.5" y="310.5" width="10" height="10" fill="#f4f4f4" stroke="#444" stroke-width="1.2"/><path d="M1103.5 310.5 L1113.5 320.5 L1113.5 310.5z" fill="#8a8a8a" stroke="#444" stroke-width="0.8"/><rect x="740.5" y="586.5" width="10" height="10" fill="#f4f4f4" stroke="#444" stroke-width="1.2"/><path d="M740.5 596.5 L750.5 586.5 L740.5 586.5z" fill="#8a8a8a" stroke="#444" stroke-width="0.8"/><rect x="1052.5" y="586.5" width="10" height="10" fill="#f4f4f4" stroke="#444" stroke-width="1.2"/><path d="M1052.5 586.5 L1062.5 596.5 L1062.5 586.5z" fill="#8a8a8a" stroke="#444" stroke-width="0.8"/><rect x="792.5" y="775.5" width="10" height="10" fill="#f4f4f4" stroke="#444" stroke-width="1.2"/><path d="M792.5 785.5 L802.5 775.5 L792.5 775.5z" fill="#8a8a8a" stroke="#444" stroke-width="0.8"/><rect x="999.5" y="775.5" width="10" height="10" fill="#f4f4f4" stroke="#444" stroke-width="1.2"/><path d="M999.5 775.5 L1009.5 785.5 L1009.5 775.5z" fill="#8a8a8a" stroke="#444" stroke-width="0.8"/><rect x="792.5" y="833.5" width="10" height="10" fill="#f4f4f4" stroke="#444" stroke-width="1.2"/><path d="M792.5 843.5 L802.5 833.5 L792.5 833.5z" fill="#8a8a8a" stroke="#444" stroke-width="0.8"/><rect x="999.5" y="833.5" width="10" height="10" fill="#f4f4f4" stroke="#444" stroke-width="1.2"/><path d="M999.5 833.5 L1009.5 843.5 L1009.5 833.5z" fill="#8a8a8a" stroke="#444" stroke-width="0.8"/><path d="M886.2 310.1h10.6l4.6 5.2l-4.6 5.2h-10.6z" fill="#8a8a8a" stroke="#444" stroke-width="0.9"/><path d="M915.8 310.1h-10.4l-4.4 5.2l4.4 5.2h10.4z" fill="#8a8a8a" stroke="#444" stroke-width="0.9"/><path d="M887.6 320.2l9.2-9.8M905 310.6l10.2 9.8" stroke="#3a3a3a" stroke-width="0.8"/><path d="M887 315.3h27.5" stroke="#a8a8a8" stroke-width="0.7"/><path d="M881 295.4 L901.2 315.2" stroke="#b8b060" stroke-width="1"/><circle cx="880.8" cy="295.4" r="4.2" fill="#e6e68a" stroke="#d4d27a" stroke-width="1"/><path d="M699 290.5H1103" stroke="#6e66bc" stroke-width="1.8"/><path d="M693 290.5l9-3.2v6.4z" fill="#1a1a8a"/><path d="M1109 290.5l-9-3.2v6.4z" fill="#1a1a8a"/><path d="M754 591.5H1049" stroke="#6e66bc" stroke-width="1.8"/><path d="M748 591.5l9-3.2v6.4z" fill="#1a1a8a"/><path d="M1055 591.5l-9-3.2v6.4z" fill="#1a1a8a"/><path d="M638.5 318V835" stroke="#5048b4" stroke-width="1.2"/><path d="M638.5 314l-3.2 9h6.4z" fill="#1a1a8a"/><path d="M638.5 839l-3.2-9h6.4z" fill="#1a1a8a"/><path d="M671.5 318V589" stroke="#5048b4" stroke-width="1.2"/><path d="M671.5 314l-3.2 9h6.4z" fill="#1a1a8a"/><path d="M671.5 593l-3.2-9h6.4z" fill="#1a1a8a"/><path d="M578.5 595V835" stroke="#5048b4" stroke-width="1.2"/><path d="M578.5 591l-3.2 9h6.4z" fill="#1a1a8a"/><path d="M578.5 839l-3.2-9h6.4z" fill="#1a1a8a"/><path d="M736.5 783V835" stroke="#5048b4" stroke-width="1.2"/><path d="M736.5 779l-3.2 9h6.4z" fill="#1a1a8a"/><path d="M736.5 839l-3.2-9h6.4z" fill="#1a1a8a"/><path d="M797.5 846V886M1004.5 846V886" stroke="#d0108a" stroke-width="1.6" stroke-dasharray="2 2"/><path d="M803 887.5H999" stroke="#d0108a" stroke-width="2"/><path d="M797 887.5l10-4.5v9z" fill="#d0108a"/><path d="M1005 887.5l-10-4.5v9z" fill="#d0108a"/></svg>
<div class="t" style="left:888px;top:273.5px;font-size:13px;line-height:16px;color:#1e1a8c;font-weight:normal;">34 <span style="font-family:Liberation Serif;font-style:italic;font-size:14px;">&#402;</span><span style="font-size:7px;font-style:italic;position:relative;left:-2px;top:1px;">x</span></div>
<div class="t" style="left:888px;top:574.5px;font-size:13px;line-height:16px;color:#1e1a8c;font-weight:normal;">26 <span style="font-family:Liberation Serif;font-style:italic;font-size:14px;">&#402;</span><span style="font-size:7px;font-style:italic;position:relative;left:-2px;top:1px;">x</span></div>
<div class="t" style="left:888px;top:870.5px;font-size:13px;line-height:16px;color:#c8108a;font-weight:normal;">17 <span style="font-family:Liberation Serif;font-style:italic;font-size:14px;">&#402;</span><span style="font-size:7px;font-style:italic;position:relative;left:-2px;top:1px;">x</span></div>
<div class="t" style="left:625px;top:444px;width:80px;text-align:center;font-size:13px;line-height:16px;color:#2a2698;transform:rotate(-90deg);">23 <span style="font-family:Liberation Serif;font-style:italic;font-size:14px;">&#402;</span><span style="font-size:7px;font-style:italic;position:relative;left:-2px;top:1px;">x</span></div>
<div class="t" style="left:593px;top:567px;width:80px;text-align:center;font-size:13px;line-height:16px;color:#2a2698;transform:rotate(-90deg);">43 <span style="font-family:Liberation Serif;font-style:italic;font-size:14px;">&#402;</span><span style="font-size:7px;font-style:italic;position:relative;left:-2px;top:1px;">x</span></div>
<div class="t" style="left:530px;top:707px;width:80px;text-align:center;font-size:13px;line-height:16px;color:#2a2698;transform:rotate(-90deg);">20</div>
<div class="t" style="left:688px;top:801px;width:80px;text-align:center;font-size:13px;line-height:16px;color:#2a2698;transform:rotate(-90deg);">5</div>
<div class="r" style="left:1200px;top:296px;width:482px;height:558px;background:#f0f0f0;border:1px solid #8a8a8a;box-sizing:border-box;box-shadow:0 2px 14px rgba(0,0,0,0.28);"></div>
<div class="r" style="left:1201px;top:297px;width:480px;height:33px;background:#ffffff;"></div>
<svg class="r" style="left:1211px;top:304px;" width="17" height="17" viewBox="0 0 17 17"><rect x="0" y="0" width="17" height="17" fill="#3a3a3a"/><path d="M12.5 5.5a5 5 0 1 0 0 6" stroke="#fff" stroke-width="2.6" fill="none"/></svg>
<div class="t" style="left:1232px;top:305.0px;font-size:12.5px;line-height:16px;color:#1e1e1e;font-weight:normal;">Formula Editor</div>
<svg class="r" style="left:1660px;top:306px;" width="12" height="12" viewBox="0 0 12 12"><path d="M1 1l10 10M11 1l-10 10" stroke="#222" stroke-width="1.2"/></svg>
<div class="t" style="left:1221px;top:340.0px;font-size:12px;line-height:16px;color:#2a2a2a;font-weight:normal;">No.</div>
<div class="t" style="left:1261px;top:340.0px;font-size:12px;line-height:16px;color:#2a2a2a;font-weight:normal;">G</div>
<div class="t" style="left:1221px;top:360.0px;font-size:12px;line-height:16px;color:#2a2a2a;font-weight:normal;">Label</div>
<div class="r" style="left:1261px;top:359px;width:400px;height:18px;background:#333333;border-radius:2px;"></div>
<div class="t" style="left:1271px;top:360.5px;font-size:12px;line-height:16px;color:#ffffff;font-weight:bold;">Sleeve edge*2</div>
<div class="t" style="left:1221px;top:389.5px;font-size:12px;line-height:16px;color:#2a2a2a;font-weight:bold;">Calculation</div>
<div class="r" style="left:1221px;top:409px;width:440px;height:287px;background:#e0e0e0;border-radius:3px;"></div>
<div class="r" style="left:1231px;top:419px;width:420px;height:68px;background:#333333;border-radius:3px;"></div>
<div class="t" style="left:1241px;top:421.0px;font-size:12px;line-height:16px;color:#ffffff;font-weight:bold;">[Sleeve edge]*2</div>
<div class="r" style="left:1231px;top:498px;width:362px;height:19px;background:linear-gradient(#fdfdfd,#f1f1f1);border-radius:2px;box-shadow:0 1px 1px #c8c8c8;"></div>
<div class="r" style="left:1243px;top:500px;width:25px;height:15px;background:#80e000;border:1px solid #333;box-sizing:border-box;"></div>
<div class="t" style="left:955.5px;width:600px;text-align:center;top:500.5px;font-size:12px;line-height:15px;color:#1e1e1e;font-weight:normal;">G</div>
<div class="t" style="left:1276px;top:501.0px;font-size:12px;line-height:16px;color:#333;font-weight:normal;">Sleeve edge*2</div>
<svg class="r" style="left:1579px;top:505px;" width="9" height="6" viewBox="0 0 9 6"><path d="M0 0h9l-4.5 6z" fill="#333"/></svg>
<div class="r" style="left:1595px;top:498px;width:56px;height:19px;background:linear-gradient(#fdfdfd 40%,#ececec);border-radius:2px;box-shadow:0 1px 1.5px #b8b8b8;"></div>
<div class="t" style="left:1323.0px;width:600px;text-align:center;top:500.5px;font-size:12px;line-height:16px;color:#222;font-weight:normal;"></div>
<svg class="r" style="left:1607px;top:501px;" width="30" height="14" viewBox="0 0 30 14"><path d="M1 11.5h20v-6" stroke="#222" stroke-width="1.6" fill="none"/><path d="M21 1l-4.5 5h9z" fill="#222"/></svg>
<div class="r" style="left:1475px;top:531px;width:26px;height:26px;background:linear-gradient(#fdfdfd 40%,#ececec);border-radius:2px;box-shadow:0 1px 1.5px #b8b8b8;"></div>
<div class="t" style="left:1188.0px;width:600px;text-align:center;top:537.0px;font-size:12px;line-height:16px;color:#222;font-weight:normal;"></div>
<svg class="r" style="left:1475px;top:532px;" width="26" height="24" viewBox="0 0 26 24"><path d="M19 12H6M11 7l-5 5l5 5" stroke="#222" stroke-width="1.7" fill="none"/></svg>
<div class="r" style="left:1505px;top:531px;width:26px;height:26px;background:linear-gradient(#fdfdfd 40%,#ececec);border-radius:2px;box-shadow:0 1px 1.5px #b8b8b8;"></div>
<div class="t" style="left:1218.0px;width:600px;text-align:center;top:537.0px;font-size:12px;line-height:16px;color:#222;font-weight:normal;"></div>
<svg class="r" style="left:1505px;top:532px;" width="26" height="24" viewBox="0 0 26 24"><path d="M6 12h13M14 7l5 5l-5 5" stroke="#222" stroke-width="1.7" fill="none"/></svg>
<div class="r" style="left:1535px;top:531px;width:56px;height:26px;background:linear-gradient(#fdfdfd 40%,#ececec);border-radius:2px;box-shadow:0 1px 1.5px #b8b8b8;"></div>
<div class="t" style="left:1263.0px;width:600px;text-align:center;top:537.0px;font-size:12px;line-height:16px;color:#222;font-weight:normal;"></div>
<svg class="r" style="left:1535px;top:532px;" width="56" height="24" viewBox="0 0 56 24"><path d="M40 12H16M21 7l-5 5l5 5" stroke="#222" stroke-width="1.7" fill="none"/></svg>
<div class="r" style="left:1595px;top:531px;width:56px;height:26px;background:linear-gradient(#fdfdfd 40%,#ececec);border-radius:2px;box-shadow:0 1px 1.5px #b8b8b8;"></div>
<div class="t" style="left:1323.0px;width:600px;text-align:center;top:537.0px;font-size:12px;line-height:16px;color:#222;font-weight:normal;">C</div>
<div class="r" style="left:1415px;top:571px;width:26px;height:26px;background:linear-gradient(#fdfdfd 40%,#ececec);border-radius:2px;box-shadow:0 1px 1.5px #b8b8b8;"></div>
<div class="t" style="left:1128.0px;width:600px;text-align:center;top:577.0px;font-size:12px;line-height:16px;color:#222;font-weight:normal;">cm</div>
<div class="r" style="left:1445px;top:571px;width:26px;height:26px;background:linear-gradient(#fdfdfd 40%,#ececec);border-radius:2px;box-shadow:0 1px 1.5px #b8b8b8;"></div>
<div class="t" style="left:1158.0px;width:600px;text-align:center;top:577.0px;font-size:12px;line-height:16px;color:#222;font-weight:normal;">inch</div>
<div class="r" style="left:1475px;top:571px;width:26px;height:26px;background:linear-gradient(#fdfdfd 40%,#ececec);border-radius:2px;box-shadow:0 1px 1.5px #b8b8b8;"></div>
<div class="t" style="left:1188.0px;width:600px;text-align:center;top:577.0px;font-size:12px;line-height:16px;color:#222;font-weight:normal;">[</div>
<div class="r" style="left:1505px;top:571px;width:26px;height:26px;background:linear-gradient(#fdfdfd 40%,#ececec);border-radius:2px;box-shadow:0 1px 1.5px #b8b8b8;"></div>
<div class="t" style="left:1218.0px;width:600px;text-align:center;top:577.0px;font-size:12px;line-height:16px;color:#222;font-weight:normal;">]</div>
<div class="r" style="left:1535px;top:571px;width:26px;height:26px;background:linear-gradient(#fdfdfd 40%,#ececec);border-radius:2px;box-shadow:0 1px 1.5px #b8b8b8;"></div>
<div class="t" style="left:1248.0px;width:600px;text-align:center;top:577.0px;font-size:12px;line-height:16px;color:#222;font-weight:normal;">7</div>
<div class="r" style="left:1565px;top:571px;width:26px;height:26px;background:linear-gradient(#fdfdfd 40%,#ececec);border-radius:2px;box-shadow:0 1px 1.5px #b8b8b8;"></div>
<div class="t" style="left:1278.0px;width:600px;text-align:center;top:577.0px;font-size:12px;line-height:16px;color:#222;font-weight:normal;">8</div>
<div class="r" style="left:1595px;top:571px;width:26px;height:26px;background:linear-gradient(#fdfdfd 40%,#ececec);border-radius:2px;box-shadow:0 1px 1.5px #b8b8b8;"></div>
<div class="t" style="left:1308.0px;width:600px;text-align:center;top:577.0px;font-size:12px;line-height:16px;color:#222;font-weight:normal;">9</div>
<div class="r" style="left:1625px;top:571px;width:26px;height:26px;background:linear-gradient(#fdfdfd 40%,#ececec);border-radius:2px;box-shadow:0 1px 1.5px #b8b8b8;"></div>
<div class="t" style="left:1338.0px;width:600px;text-align:center;top:577.0px;font-size:12px;line-height:16px;color:#222;font-weight:normal;">/</div>
<div class="r" style="left:1445px;top:601px;width:26px;height:26px;background:linear-gradient(#fdfdfd 40%,#ececec);border-radius:2px;box-shadow:0 1px 1.5px #b8b8b8;"></div>
<div class="t" style="left:1158.0px;width:600px;text-align:center;top:607.0px;font-size:12px;line-height:16px;color:#222;font-weight:normal;">()</div>
<div class="r" style="left:1475px;top:601px;width:26px;height:26px;background:linear-gradient(#fdfdfd 40%,#ececec);border-radius:2px;box-shadow:0 1px 1.5px #b8b8b8;"></div>
<div class="t" style="left:1188.0px;width:600px;text-align:center;top:607.0px;font-size:12px;line-height:16px;color:#222;font-weight:normal;">()&#178;</div>
<div class="r" style="left:1505px;top:601px;width:26px;height:26px;background:linear-gradient(#fdfdfd 40%,#ececec);border-radius:2px;box-shadow:0 1px 1.5px #b8b8b8;"></div>
<div class="t" style="left:1218.0px;width:600px;text-align:center;top:607.0px;font-size:12px;line-height:16px;color:#222;font-weight:normal;">&#8730;()</div>
<div class="r" style="left:1535px;top:601px;width:26px;height:26px;background:linear-gradient(#fdfdfd 40%,#ececec);border-radius:2px;box-shadow:0 1px 1.5px #b8b8b8;"></div>
<div class="t" style="left:1248.0px;width:600px;text-align:center;top:607.0px;font-size:12px;line-height:16px;color:#222;font-weight:normal;">4</div>
<div class="r" style="left:1565px;top:601px;width:26px;height:26px;background:linear-gradient(#fdfdfd 40%,#ececec);border-radius:2px;box-shadow:0 1px 1.5px #b8b8b8;"></div>
<div class="t" style="left:1278.0px;width:600px;text-align:center;top:607.0px;font-size:12px;line-height:16px;color:#222;font-weight:normal;">5</div>
<div class="r" style="left:1595px;top:601px;width:26px;height:26px;background:linear-gradient(#fdfdfd 40%,#ececec);border-radius:2px;box-shadow:0 1px 1.5px #b8b8b8;"></div>
<div class="t" style="left:1308.0px;width:600px;text-align:center;top:607.0px;font-size:12px;line-height:16px;color:#222;font-weight:normal;">6</div>
<div class="r" style="left:1625px;top:601px;width:26px;height:26px;background:linear-gradient(#fdfdfd 40%,#ececec);border-radius:2px;box-shadow:0 1px 1.5px #b8b8b8;"></div>
<div class="t" style="left:1338.0px;width:600px;text-align:center;top:607.0px;font-size:12px;line-height:16px;color:#222;font-weight:normal;">*</div>
<div class="r" style="left:1445px;top:631px;width:26px;height:26px;background:linear-gradient(#fdfdfd 40%,#ececec);border-radius:2px;box-shadow:0 1px 1.5px #b8b8b8;"></div>
<div class="t" style="left:1158.0px;width:600px;text-align:center;top:637.0px;font-size:12px;line-height:16px;color:#222;font-weight:normal;">sin</div>
<div class="r" style="left:1475px;top:631px;width:26px;height:26px;background:linear-gradient(#fdfdfd 40%,#ececec);border-radius:2px;box-shadow:0 1px 1.5px #b8b8b8;"></div>
<div class="t" style="left:1188.0px;width:600px;text-align:center;top:637.0px;font-size:12px;line-height:16px;color:#222;font-weight:normal;">cos</div>
<div class="r" style="left:1505px;top:631px;width:26px;height:26px;background:linear-gradient(#fdfdfd 40%,#ececec);border-radius:2px;box-shadow:0 1px 1.5px #b8b8b8;"></div>
<div class="t" style="left:1218.0px;width:600px;text-align:center;top:637.0px;font-size:12px;line-height:16px;color:#222;font-weight:normal;">tan</div>
<div class="r" style="left:1535px;top:631px;width:26px;height:26px;background:linear-gradient(#fdfdfd 40%,#ececec);border-radius:2px;box-shadow:0 1px 1.5px #b8b8b8;"></div>
<div class="t" style="left:1248.0px;width:600px;text-align:center;top:637.0px;font-size:12px;line-height:16px;color:#222;font-weight:normal;">1</div>
<div class="r" style="left:1565px;top:631px;width:26px;height:26px;background:linear-gradient(#fdfdfd 40%,#ececec);border-radius:2px;box-shadow:0 1px 1.5px #b8b8b8;"></div>
<div class="t" style="left:1278.0px;width:600px;text-align:center;top:637.0px;font-size:12px;line-height:16px;color:#222;font-weight:normal;">2</div>
<div class="r" style="left:1595px;top:631px;width:26px;height:26px;background:linear-gradient(#fdfdfd 40%,#ececec);border-radius:2px;box-shadow:0 1px 1.5px #b8b8b8;"></div>
<div class="t" style="left:1308.0px;width:600px;text-align:center;top:637.0px;font-size:12px;line-height:16px;color:#222;font-weight:normal;">3</div>
<div class="r" style="left:1625px;top:631px;width:26px;height:26px;background:linear-gradient(#fdfdfd 40%,#ececec);border-radius:2px;box-shadow:0 1px 1.5px #b8b8b8;"></div>
<div class="t" style="left:1338.0px;width:600px;text-align:center;top:637.0px;font-size:12px;line-height:16px;color:#222;font-weight:normal;">-</div>
<div class="r" style="left:1445px;top:661px;width:26px;height:26px;background:linear-gradient(#fdfdfd 40%,#ececec);border-radius:2px;box-shadow:0 1px 1.5px #b8b8b8;"></div>
<div class="t" style="left:1158.0px;width:600px;text-align:center;top:667.0px;font-size:12px;line-height:16px;color:#222;font-weight:normal;"></div>
<div class="r" style="left:1475px;top:661px;width:26px;height:26px;background:linear-gradient(#fdfdfd 40%,#ececec);border-radius:2px;box-shadow:0 1px 1.5px #b8b8b8;"></div>
<div class="t" style="left:1188.0px;width:600px;text-align:center;top:667.0px;font-size:12px;line-height:16px;color:#222;font-weight:normal;">(</div>
<div class="r" style="left:1505px;top:661px;width:26px;height:26px;background:linear-gradient(#fdfdfd 40%,#ececec);border-radius:2px;box-shadow:0 1px 1.5px #b8b8b8;"></div>
<div class="t" style="left:1218.0px;width:600px;text-align:center;top:667.0px;font-size:12px;line-height:16px;color:#222;font-weight:normal;">)</div>
<div class="r" style="left:1595px;top:661px;width:26px;height:26px;background:linear-gradient(#fdfdfd 40%,#ececec);border-radius:2px;box-shadow:0 1px 1.5px #b8b8b8;"></div>
<div class="t" style="left:1308.0px;width:600px;text-align:center;top:667.0px;font-size:12px;line-height:16px;color:#222;font-weight:normal;">.</div>
<div class="r" style="left:1625px;top:661px;width:26px;height:26px;background:linear-gradient(#fdfdfd 40%,#ececec);border-radius:2px;box-shadow:0 1px 1.5px #b8b8b8;"></div>
<div class="t" style="left:1338.0px;width:600px;text-align:center;top:667.0px;font-size:12px;line-height:16px;color:#222;font-weight:normal;">+</div>
<div class="r" style="left:1535px;top:661px;width:56px;height:26px;background:linear-gradient(#fdfdfd 40%,#ececec);border-radius:2px;box-shadow:0 1px 1.5px #b8b8b8;"></div>
<div class="t" style="left:1263.0px;width:600px;text-align:center;top:667.0px;font-size:12px;line-height:16px;color:#222;font-weight:normal;">0</div>
<svg class="r" style="left:1445px;top:661px" width="26" height="26" viewBox="1445 661 26 26"><path d="M1454.5 677.5v1.5h7v-1.5" stroke="#222" stroke-width="1.1" fill="none"/></svg>
<div class="t" style="left:1221px;top:708.0px;font-size:12px;line-height:16px;color:#2a2a2a;font-weight:bold;">Correction by stitches</div>
<div class="r" style="left:1221px;top:727px;width:440px;height:66px;background:#e0e0e0;border-radius:3px;"></div>
<div class="t" style="left:1231px;top:738.0px;font-size:12px;line-height:16px;color:#333;font-weight:normal;">Fabric Piece</div>
<svg class="r" style="left:1326px;top:738px" width="18" height="16" viewBox="1326 738 18 16"><path d="M1331.5 746h7.5" stroke="#333" stroke-width="1"/><path d="M1330.5 746l2.6-2.2v4.4zM1340 746l-2.6-2.2v4.4z" fill="#333"/></svg>
<div class="t" style="left:1350px;top:738.0px;font-size:12px;line-height:16px;color:#333;font-weight:normal;">Sleeve</div>
<div class="t" style="left:1231px;top:766.0px;font-size:12px;line-height:16px;color:#333;font-weight:normal;">Correction Value</div>
<div class="r" style="left:1330px;top:765px;width:321px;height:18px;background:#333333;border-radius:2px;"></div>
<div class="t" style="left:1033px;width:600px;text-align:right;top:766.0px;font-size:12px;line-height:16px;color:#ffffff;font-weight:bold;">0</div>
<svg class="r" style="left:1638px;top:767px;" width="8" height="14" viewBox="0 0 8 14"><path d="M0.5 5.5l3.5-4l3.5 4zM0.5 8.5l3.5 4l3.5-4z" fill="#fff"/></svg>
<div class="r" style="left:1201px;top:835px;width:480px;height:18px;background:#a3a3a3;"></div>
<div class="r" style="left:1571px;top:815px;width:88px;height:28px;background:linear-gradient(#ffffff 30%,#e9e9e9);border-radius:3px;box-shadow:0 1px 2px #b0b0b0;"></div>
<div class="t" style="left:1314px;width:600px;text-align:center;top:822.0px;font-size:12px;line-height:16px;color:#222;font-weight:normal;">Apply</div>
<div class="r" style="left:439px;top:1031px;width:1473px;height:1px;background:#d8d8d8;"></div>
<div class="r" style="left:1911px;top:1004px;width:1px;height:28px;background:#d8d8d8;"></div>
<div class="r" style="left:465px;top:1007px;width:22px;height:22px;background:#b6b7ba;"></div>
<div class="r" style="left:600px;top:1007px;width:82px;height:22px;background:#f4f4f4;border:1px solid #8a8a8a;box-sizing:border-box;"></div>
<div class="r" style="left:601px;top:1008px;width:20px;height:20px;background:#2a8ad8;"></div>
<svg class="r" style="left:440px;top:1002px" width="400" height="32" viewBox="440 1002 400 32"><path d="M448.0 1013.7H460.0" stroke="#3a3a3a" stroke-width="1.8"/><path d="M446.5 1013.7l3.2 -3.2v6.4z" fill="#3a3a3a"/><path d="M461.5 1013.7l-3.2 -3.2v6.4z" fill="#3a3a3a"/><path d="M448.0 1022.2H460.0" stroke="#3a3a3a" stroke-width="1.8"/><path d="M446.5 1022.2l3.2 -3.2v6.4z" fill="#3a3a3a"/><path d="M461.5 1022.2l-3.2 -3.2v6.4z" fill="#3a3a3a"/><path d="M469.9 1018.3H482.1" stroke="#3a3a3a" stroke-width="2.0"/><path d="M468.4 1018.3l3.6 -3.6v7.2z" fill="#3a3a3a"/><path d="M483.6 1018.3l-3.6 -3.6v7.2z" fill="#3a3a3a"/><path d="M490 1014h5M492.5 1011.5v5M498 1019l4.5-7.2M501.2 1017h4.6" stroke="#3a3a3a" stroke-width="1.5"/><path d="M491.5 1022.8H504.3" stroke="#3a3a3a" stroke-width="1.8"/><path d="M490 1022.8l3.2 -3.2v6.4z" fill="#3a3a3a"/><path d="M505.8 1022.8l-3.2 -3.2v6.4z" fill="#3a3a3a"/><path d="M529.5 1013.7v8.5M542.5 1013.7v8.5M529.5 1018h13" stroke="#3a3a3a" stroke-width="1.6"/><path d="M556.5 1011.5h-5.5v13h5.5M549 1018h2" stroke="#3a3a3a" stroke-width="1.6" fill="none"/><text x="557.6" y="1013.8" font-size="5" font-family="Liberation Sans" fill="#555">2-2</text><text x="557.6" y="1020" font-size="5" font-family="Liberation Sans" fill="#555">2-3</text><text x="557.6" y="1026" font-size="5" font-family="Liberation Sans" fill="#555">2-6</text><path d="M575 1011.5h3l1 1h2l1-1h3v14.5h-10z" fill="none" stroke="#3a3a3a" stroke-width="1.3"/><path d="M580 1014v2.5M580 1018v2.5M580 1022v2.5" stroke="#3a3a3a" stroke-width="1.4"/><path d="M604.5 1011.5l2-2l2 2h3l2-2l2 2v14.5h-11z" fill="none" stroke="#fff" stroke-width="1.3"/><path d="M606 1016h8M606 1019h8M606 1022h8" stroke="#fff" stroke-width="0.9"/><path d="M603.5 1026.5L618.5 1009.5" stroke="#c02030" stroke-width="2.4"/><path d="M624 1012.5l1.2-2.8l1.8 1.8l1.8-1.8l1.2 2.8z" fill="#3a3a3a"/><rect x="624" y="1013.5" width="9.5" height="1.6" fill="#3a3a3a"/><rect x="624" y="1015.3" width="9.5" height="1.9" fill="#20a040"/><rect x="624" y="1017.2" width="9.5" height="1.9" fill="#e03040"/><rect x="624" y="1019.1" width="9.5" height="1.9" fill="#20a040"/><rect x="628.8" y="1018.4" width="10.4" height="8.4" fill="#f4f4f4"/><rect x="629.5" y="1019" width="9" height="7" rx="0.8" fill="#3a3a3a"/><rect x="630.7" y="1020.2" width="2.9" height="1.0" fill="#fff"/><rect x="630.7" y="1022.0" width="2.9" height="1.0" fill="#fff"/><rect x="630.7" y="1023.8" width="2.9" height="1.0" fill="#fff"/><rect x="634.4" y="1020.2" width="2.9" height="1.0" fill="#fff"/><rect x="634.4" y="1022.0" width="2.9" height="1.0" fill="#fff"/><rect x="634.4" y="1023.8" width="2.9" height="1.0" fill="#fff"/><path d="M646.6 1011.7q0-1.2 1.2-1.2h3.9q1.2 0 1.2 1.2l2.5 9.4q0.3 1.4-1 1.4h-10.2q-1.3 0-1-1.4z" fill="#3a3a3a"/><path d="M648.0 1012.0h3.6" stroke="#f0f0f0" stroke-width="0.9" stroke-linecap="round"/><rect x="649.3" y="1018.4" width="10.4" height="8.4" fill="#f4f4f4"/><rect x="650" y="1019" width="9" height="7" rx="0.8" fill="#3a3a3a"/><rect x="651.2" y="1020.2" width="2.9" height="1.0" fill="#fff"/><rect x="651.2" y="1022.0" width="2.9" height="1.0" fill="#fff"/><rect x="651.2" y="1023.8" width="2.9" height="1.0" fill="#fff"/><rect x="654.9" y="1020.2" width="2.9" height="1.0" fill="#fff"/><rect x="654.9" y="1022.0" width="2.9" height="1.0" fill="#fff"/><rect x="654.9" y="1023.8" width="2.9" height="1.0" fill="#fff"/><path d="M669 1013h9M664 1015.7h8M668 1020.2h4M664 1020.2h2M669 1022.8h9" stroke="#e8a020" stroke-width="1.5"/><path d="M664 1015.7h8M664 1020.2h8" stroke="#2aa0e0" stroke-width="1.5"/><rect x="697.8" y="1009.8" width="10.2" height="3.9" fill="#3a3a3a"/><rect x="710" y="1009.8" width="3.8" height="3.9" fill="#3a3a3a"/><rect x="697.8" y="1016" width="3.9" height="9.8" fill="#3a3a3a"/><rect x="704" y="1016" width="9.8" height="3.6" fill="#3a3a3a"/><rect x="704" y="1022" width="4" height="3.8" fill="#3a3a3a"/><rect x="710" y="1022" width="3.8" height="3.8" fill="#3a3a3a"/><pattern id="chk" x="737" y="1011" width="4" height="4" patternUnits="userSpaceOnUse"><rect width="2" height="2" fill="#111"/><rect x="2" y="2" width="2" height="2" fill="#111"/></pattern><rect x="737" y="1011" width="14" height="14" fill="url(#chk)"/><rect x="774.5" y="1010.3" width="15" height="15" fill="none" stroke="#3a3a3a" stroke-width="1.2"/><path d="M775 1017l3.5 3l2-2l5.5 6.5v1h-11z" fill="#3a3a3a"/><circle cx="785" cy="1015" r="1.7" fill="#3a3a3a"/><path d="M818.6 1024.1999999999998v-10.5l1.6-2.2l1.2-2.8l1.6 1.5l1.2-1.8l1.4 1.2l0.8 2v12.6z" fill="#fafafa" stroke="#3a3a3a" stroke-width="0.9" stroke-linejoin="round"/><path d="M815.8 1025.0v-10.5l1.6-2.2l1.2-2.8l1.6 1.5l1.2-1.8l1.4 1.2l0.8 2v12.6z" fill="#fafafa" stroke="#3a3a3a" stroke-width="0.9" stroke-linejoin="round"/><path d="M813 1025.8v-10.5l1.6-2.2l1.2-2.8l1.6 1.5l1.2-1.8l1.4 1.2l0.8 2v12.6z" fill="#3a3a3a" stroke="#3a3a3a" stroke-width="0.9" stroke-linejoin="round"/></svg>
<div class="t" style="left:1546px;top:1011.0px;font-size:12px;line-height:16px;color:#222;font-weight:normal;">X 0.2 cm</div>
<div class="t" style="left:1606px;top:1011.0px;font-size:12px;line-height:16px;color:#222;font-weight:normal;">Y -7.2 cm</div>
<div class="t" style="left:1676px;top:1011.0px;font-size:12px;line-height:16px;color:#222;font-weight:normal;">&#8721; 0.0 cm</div>
<div class="r" style="left:1750px;top:1016px;width:82px;height:4px;background:#e6e6e6;border:1px solid #d0d0d0;box-sizing:border-box;"></div>
<div class="r" style="left:1739px;top:1009px;width:12px;height:18px;background:#f2f2f2;border:1px solid #a0a0a0;box-sizing:border-box;border-radius:1px;"></div>
<div class="t" style="left:1853px;top:1011.0px;font-size:12px;line-height:16px;color:#222;font-weight:normal;">Zoom 12.2</div>
</body></html>
